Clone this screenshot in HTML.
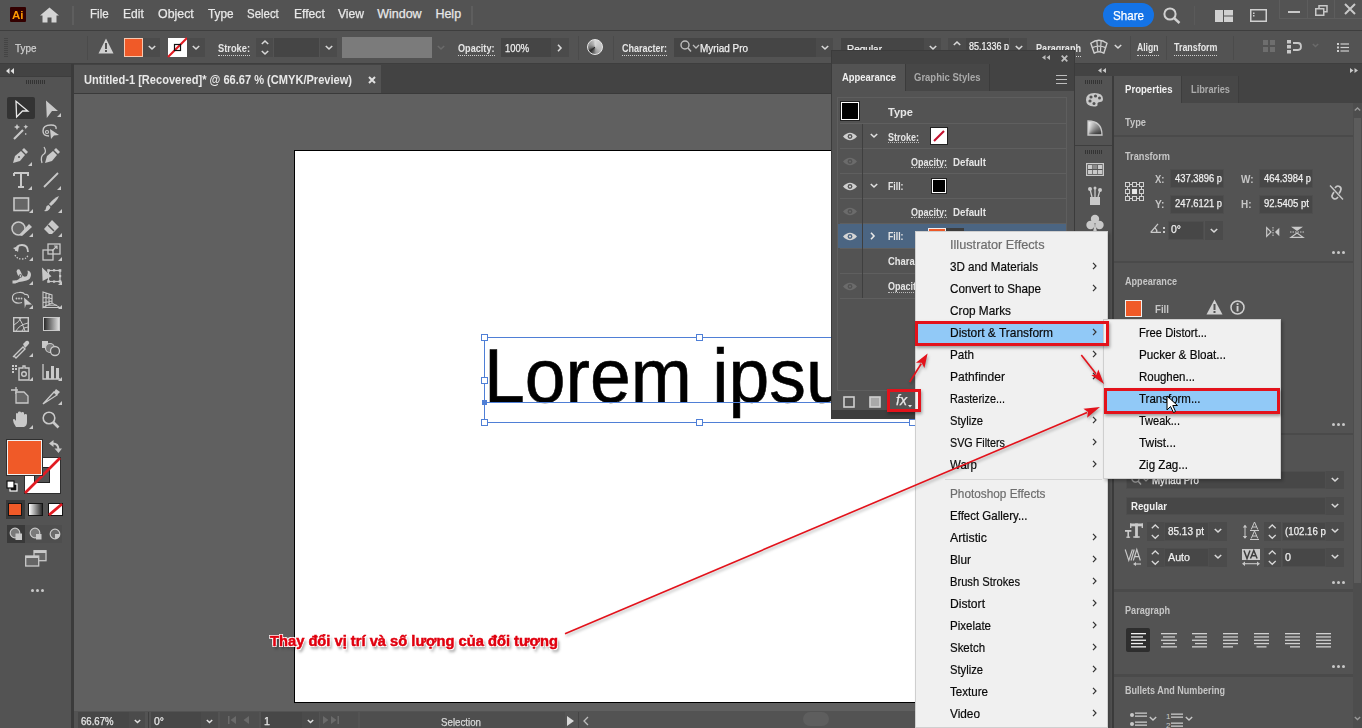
<!DOCTYPE html>
<html><head><meta charset="utf-8">
<style>
*{margin:0;padding:0;box-sizing:border-box}
html,body{width:1362px;height:728px;overflow:hidden}
body{background:#535353;font-family:"Liberation Sans",sans-serif;position:relative}
.a{position:absolute}
.t{position:absolute;white-space:pre;line-height:1.117}
svg{overflow:visible}
</style></head><body>

<div class="a" style="left:0px;top:0px;width:1362px;height:30px;background:#535353;"></div>
<div class="a" style="left:0px;top:30px;width:1362px;height:1px;background:#3e3e3e;"></div>
<div class="a" style="left:10px;top:7px;width:16px;height:15px;background:#330000;border-radius:1px"></div>
<span class="t" id="t0" style="left:12.20px;top:10.00px;font-size:10px;color:#ff9a00;font-weight:700;font-family:'Liberation Sans',sans-serif;transform:scaleX(1.1500);transform-origin:0 0;">Ai</span>
<svg class="a" style="left:40px;top:7px;" width="19" height="16" viewBox="0 0 19 16"><path d="M9.5 0.5 L19 8.5 L16.5 8.5 L16.5 15.5 L11.5 15.5 L11.5 10.5 L7.5 10.5 L7.5 15.5 L2.5 15.5 L2.5 8.5 L0 8.5 Z" fill="#d4d4d4"/></svg>
<div class="a" style="left:72px;top:6px;width:2px;height:19px;background:#5e5e5e;"></div>
<span class="t" id="t1" style="left:89.50px;top:8.00px;font-size:12.5px;color:#e8e8e8;font-weight:400;-webkit-text-stroke:0.25px #e8e8e8;font-family:'Liberation Sans',sans-serif;transform:scaleX(0.9278);transform-origin:0 0;">File</span>
<span class="t" id="t2" style="left:122.60px;top:8.00px;font-size:12.5px;color:#e8e8e8;font-weight:400;-webkit-text-stroke:0.25px #e8e8e8;font-family:'Liberation Sans',sans-serif;transform:scaleX(0.9653);transform-origin:0 0;">Edit</span>
<span class="t" id="t3" style="left:157.50px;top:8.00px;font-size:12.5px;color:#e8e8e8;font-weight:400;-webkit-text-stroke:0.25px #e8e8e8;font-family:'Liberation Sans',sans-serif;transform:scaleX(0.9906);transform-origin:0 0;">Object</span>
<span class="t" id="t4" style="left:207.50px;top:8.00px;font-size:12.5px;color:#e8e8e8;font-weight:400;-webkit-text-stroke:0.25px #e8e8e8;font-family:'Liberation Sans',sans-serif;transform:scaleX(0.9406);transform-origin:0 0;">Type</span>
<span class="t" id="t5" style="left:247.40px;top:8.00px;font-size:12.5px;color:#e8e8e8;font-weight:400;-webkit-text-stroke:0.25px #e8e8e8;font-family:'Liberation Sans',sans-serif;transform:scaleX(0.9151);transform-origin:0 0;">Select</span>
<span class="t" id="t6" style="left:293.50px;top:8.00px;font-size:12.5px;color:#e8e8e8;font-weight:400;-webkit-text-stroke:0.25px #e8e8e8;font-family:'Liberation Sans',sans-serif;transform:scaleX(0.9706);transform-origin:0 0;">Effect</span>
<span class="t" id="t7" style="left:338.00px;top:8.00px;font-size:12.5px;color:#e8e8e8;font-weight:400;-webkit-text-stroke:0.25px #e8e8e8;font-family:'Liberation Sans',sans-serif;transform:scaleX(0.9674);transform-origin:0 0;">View</span>
<span class="t" id="t8" style="left:377.20px;top:8.00px;font-size:12.5px;color:#e8e8e8;font-weight:400;-webkit-text-stroke:0.25px #e8e8e8;font-family:'Liberation Sans',sans-serif;">Window</span>
<span class="t" id="t9" style="left:435.40px;top:8.00px;font-size:12.5px;color:#e8e8e8;font-weight:400;-webkit-text-stroke:0.25px #e8e8e8;font-family:'Liberation Sans',sans-serif;">Help</span>
<div class="a" style="left:471px;top:6px;width:2px;height:19px;background:#5e5e5e;"></div>
<div class="a" style="left:1103px;top:3px;width:51px;height:24px;background:#1473e6;border-radius:12px"></div>
<span class="t" id="t10" style="left:1113.00px;top:9.00px;font-size:13px;color:#ffffff;font-weight:400;-webkit-text-stroke:0.25px #ffffff;font-family:'Liberation Sans',sans-serif;transform:scaleX(0.8933);transform-origin:0 0;">Share</span>
<svg class="a" style="left:1163px;top:7px;" width="19" height="17" viewBox="0 0 19 17"><circle cx="7" cy="7" r="5.6" fill="none" stroke="#d0d0d0" stroke-width="2"/><line x1="11" y1="11" x2="16.5" y2="16" stroke="#d0d0d0" stroke-width="2.4"/></svg>
<div class="a" style="left:1194px;top:6px;width:1px;height:19px;background:#5a5a5a;"></div>
<svg class="a" style="left:1215px;top:10px;" width="18" height="12" viewBox="0 0 18 12"><rect x="0" y="0" width="8" height="12" fill="#d0d0d0"/><rect x="9" y="0" width="9" height="5.5" fill="#d0d0d0"/><rect x="9" y="6.5" width="9" height="5.5" fill="#d0d0d0"/></svg>
<svg class="a" style="left:1250px;top:9px;" width="17" height="13" viewBox="0 0 17 13"><rect x="0.75" y="0.75" width="15.5" height="11.5" fill="none" stroke="#d0d0d0" stroke-width="1.5"/><rect x="3" y="3.5" width="1.5" height="1.5" fill="#d0d0d0"/><rect x="3" y="6" width="1.5" height="1.5" fill="#d0d0d0"/></svg>
<div class="a" style="left:1279px;top:-1px;width:84px;height:20px;border:1px solid #5d5d5d;"></div>
<div class="a" style="left:1307px;top:0px;width:1px;height:18px;background:#5d5d5d;"></div>
<div class="a" style="left:1334px;top:0px;width:1px;height:18px;background:#5d5d5d;"></div>
<div class="a" style="left:1288px;top:11px;width:12px;height:2px;background:#c8c8c8;"></div>
<svg class="a" style="left:1315px;top:5px;" width="13" height="11" viewBox="0 0 13 11"><rect x="4" y="0.75" width="8" height="6" fill="none" stroke="#c8c8c8" stroke-width="1.5"/><rect x="0.75" y="3.75" width="8" height="6.5" fill="#535353" stroke="#c8c8c8" stroke-width="1.5"/></svg>
<svg class="a" style="left:1344px;top:3px;" width="12" height="12" viewBox="0 0 12 12"><path d="M1 1 L11 11 M11 1 L1 11" stroke="#c8c8c8" stroke-width="2"/></svg>
<div class="a" style="left:0px;top:31px;width:1362px;height:33px;background:#535353;"></div>
<div class="a" style="left:0px;top:63px;width:1362px;height:1px;background:#3e3e3e;"></div>
<div class="a" style="left:4px;top:38px;width:4px;height:1px;background:#444444;"></div>
<div class="a" style="left:4px;top:40px;width:4px;height:1px;background:#444444;"></div>
<div class="a" style="left:4px;top:42px;width:4px;height:1px;background:#444444;"></div>
<div class="a" style="left:4px;top:44px;width:4px;height:1px;background:#444444;"></div>
<div class="a" style="left:4px;top:46px;width:4px;height:1px;background:#444444;"></div>
<div class="a" style="left:4px;top:48px;width:4px;height:1px;background:#444444;"></div>
<div class="a" style="left:4px;top:50px;width:4px;height:1px;background:#444444;"></div>
<div class="a" style="left:4px;top:52px;width:4px;height:1px;background:#444444;"></div>
<div class="a" style="left:4px;top:54px;width:4px;height:1px;background:#444444;"></div>
<div class="a" style="left:4px;top:56px;width:4px;height:1px;background:#444444;"></div>
<span class="t" id="t11" style="left:14.50px;top:42.00px;font-size:11px;color:#cfcfcf;font-weight:400;-webkit-text-stroke:0.25px #cfcfcf;font-family:'Liberation Sans',sans-serif;transform:scaleX(0.9011);transform-origin:0 0;">Type</span>
<div class="a" style="left:87px;top:36px;width:1px;height:24px;background:#4b4b4b;"></div>
<svg class="a" style="left:98px;top:38px;" width="16" height="16" viewBox="0 0 16 16"><path d="M8 0.5 L15.5 15.5 L0.5 15.5 Z" fill="#d0d0d0"/><rect x="7" y="5" width="2" height="6" fill="#535353"/><rect x="7" y="12" width="2" height="2" fill="#535353"/></svg>
<div class="a" style="left:124px;top:38px;width:19px;height:19px;background:#f05a28;border:1px solid #f7c8b0"></div>
<div class="a" style="left:143px;top:38px;width:17px;height:19px;background:#4b4b4b;"></div>
<svg class="a" style="left:147.5px;top:45.0px;" width="8" height="6.0" viewBox="0 0 8 6.0"><polyline points="0.8,1 4.0,4.0 7.2,1" fill="none" stroke="#d8d8d8" stroke-width="1.6"/></svg>
<div class="a" style="left:168px;top:38px;width:19px;height:19px;background:#ffffff;"></div>
<svg class="a" style="left:168px;top:38px;" width="19" height="19" viewBox="0 0 19 19"><line x1="0" y1="19" x2="19" y2="0" stroke="#e11b22" stroke-width="2.2"/><rect x="6.5" y="6.5" width="6" height="6" fill="none" stroke="#111" stroke-width="1.2"/></svg>
<div class="a" style="left:187px;top:38px;width:18px;height:19px;background:#4b4b4b;"></div>
<svg class="a" style="left:192.0px;top:45.0px;" width="8" height="6.0" viewBox="0 0 8 6.0"><polyline points="0.8,1 4.0,4.0 7.2,1" fill="none" stroke="#d8d8d8" stroke-width="1.6"/></svg>
<span class="t" id="t12" style="left:217.50px;top:42.00px;font-size:11.5px;color:#e6e6e6;font-weight:700;font-family:'Liberation Sans',sans-serif;transform:scaleX(0.8076);transform-origin:0 0;">Stroke:</span>
<div class="a" style="left:217.5px;top:55px;width:32px;height:1px;border-top:1px dotted #cfcfcf"></div>
<div class="a" style="left:256px;top:38px;width:17px;height:19px;background:#4b4b4b;"></div>
<svg class="a" style="left:260.5px;top:40.0px;" width="8" height="6.0" viewBox="0 0 8 6.0"><polyline points="0.8,4.0 4.0,1 7.2,4.0" fill="none" stroke="#d8d8d8" stroke-width="1.6"/></svg>
<svg class="a" style="left:260.5px;top:49.5px;" width="8" height="6.0" viewBox="0 0 8 6.0"><polyline points="0.8,1 4.0,4.0 7.2,1" fill="none" stroke="#d8d8d8" stroke-width="1.6"/></svg>
<div class="a" style="left:274px;top:38px;width:45px;height:19px;background:#454545;"></div>
<div class="a" style="left:320px;top:38px;width:17px;height:19px;background:#4b4b4b;"></div>
<svg class="a" style="left:324.5px;top:45.0px;" width="8" height="6.0" viewBox="0 0 8 6.0"><polyline points="0.8,1 4.0,4.0 7.2,1" fill="none" stroke="#d8d8d8" stroke-width="1.6"/></svg>
<div class="a" style="left:342px;top:37px;width:90px;height:21px;background:#7b7b7b;"></div>
<svg class="a" style="left:437.0px;top:45.0px;" width="8" height="6.0" viewBox="0 0 8 6.0"><polyline points="0.8,1 4.0,4.0 7.2,1" fill="none" stroke="#6a6a6a" stroke-width="1.6"/></svg>
<span class="t" id="t13" style="left:458.00px;top:42.00px;font-size:11.5px;color:#e6e6e6;font-weight:700;font-family:'Liberation Sans',sans-serif;transform:scaleX(0.7932);transform-origin:0 0;">Opacity:</span>
<div class="a" style="left:458px;top:55px;width:36.5px;height:1px;border-top:1px dotted #cfcfcf"></div>
<div class="a" style="left:501px;top:38px;width:50px;height:19px;background:#454545;"></div>
<span class="t" id="t14" style="left:504.50px;top:42.00px;font-size:11.5px;color:#f0f0f0;font-weight:400;-webkit-text-stroke:0.25px #f0f0f0;font-family:'Liberation Sans',sans-serif;transform:scaleX(0.8157);transform-origin:0 0;">100%</span>
<div class="a" style="left:551px;top:38px;width:18px;height:19px;background:#4b4b4b;"></div>
<svg class="a" style="left:557.0px;top:43.5px;" width="6.0" height="8" viewBox="0 0 6.0 8"><polyline points="1,0.8 4.0,4.0 1,7.2" fill="none" stroke="#d8d8d8" stroke-width="1.6"/></svg>
<div class="a" style="left:578px;top:36px;width:1px;height:24px;background:#4b4b4b;"></div>
<div class="a" style="left:587px;top:39px;width:16px;height:16px;border-radius:50%;border:1.5px solid #e8e8e8;background:conic-gradient(#d8d8d8 0deg,#c8c8c8 60deg,#bdbdbd 120deg,#9a9a9a 170deg,#5a5a5a 200deg,#2a2a2a 230deg,#707070 260deg,#9a9a9a 300deg,#b8b8b8 340deg,#d8d8d8 360deg)"></div>
<div class="a" style="left:613px;top:36px;width:1px;height:24px;background:#4b4b4b;"></div>
<span class="t" id="t15" style="left:622.00px;top:42.00px;font-size:11.5px;color:#e6e6e6;font-weight:700;font-family:'Liberation Sans',sans-serif;transform:scaleX(0.7822);transform-origin:0 0;">Character:</span>
<div class="a" style="left:622px;top:55px;width:45px;height:1px;border-top:1px dotted #cfcfcf"></div>
<div class="a" style="left:674px;top:38px;width:142px;height:19px;background:#454545;"></div>
<svg class="a" style="left:680px;top:40px;" width="22" height="14" viewBox="0 0 22 14"><circle cx="5" cy="5" r="4" fill="none" stroke="#bcbcbc" stroke-width="1.4"/><line x1="8" y1="8" x2="11" y2="11.5" stroke="#bcbcbc" stroke-width="1.5"/><polyline points="13,5 16,8 19,5" fill="none" stroke="#bcbcbc" stroke-width="1.3"/></svg>
<span class="t" id="t16" style="left:700.00px;top:42.00px;font-size:11.5px;color:#f0f0f0;font-weight:400;-webkit-text-stroke:0.25px #f0f0f0;font-family:'Liberation Sans',sans-serif;transform:scaleX(0.8632);transform-origin:0 0;">Myriad Pro</span>
<div class="a" style="left:816px;top:38px;width:17px;height:19px;background:#4b4b4b;"></div>
<svg class="a" style="left:820.5px;top:45.0px;" width="8" height="6.0" viewBox="0 0 8 6.0"><polyline points="0.8,1 4.0,4.0 7.2,1" fill="none" stroke="#d8d8d8" stroke-width="1.6"/></svg>
<div class="a" style="left:841px;top:38px;width:83px;height:19px;background:#454545;"></div>
<span class="t" id="t17" style="left:847.00px;top:43.00px;font-size:11.5px;color:#f0f0f0;font-weight:400;-webkit-text-stroke:0.25px #f0f0f0;font-family:'Liberation Sans',sans-serif;transform:scaleX(0.8689);transform-origin:0 0;">Regular</span>
<div class="a" style="left:924px;top:38px;width:17px;height:19px;background:#4b4b4b;"></div>
<svg class="a" style="left:928.5px;top:45.0px;" width="8" height="6.0" viewBox="0 0 8 6.0"><polyline points="0.8,1 4.0,4.0 7.2,1" fill="none" stroke="#d8d8d8" stroke-width="1.6"/></svg>
<div class="a" style="left:948px;top:38px;width:18px;height:19px;background:#4b4b4b;"></div>
<svg class="a" style="left:953.0px;top:41.0px;" width="8" height="6.0" viewBox="0 0 8 6.0"><polyline points="0.8,4.0 4.0,1 7.2,4.0" fill="none" stroke="#d8d8d8" stroke-width="1.6"/></svg>
<div class="a" style="left:966px;top:38px;width:43px;height:19px;background:#454545;"></div>
<span class="t" id="t18" style="left:969.00px;top:40.00px;font-size:11.5px;color:#f0f0f0;font-weight:400;-webkit-text-stroke:0.25px #f0f0f0;font-family:'Liberation Sans',sans-serif;transform:scaleX(0.7817);transform-origin:0 0;">85.1336 p</span>
<div class="a" style="left:1010px;top:38px;width:17px;height:19px;background:#4b4b4b;"></div>
<svg class="a" style="left:1014.5px;top:45.0px;" width="8" height="6.0" viewBox="0 0 8 6.0"><polyline points="0.8,1 4.0,4.0 7.2,1" fill="none" stroke="#d8d8d8" stroke-width="1.6"/></svg>
<span class="t" id="t19" style="left:1036.00px;top:42.00px;font-size:11.5px;color:#e6e6e6;font-weight:700;font-family:'Liberation Sans',sans-serif;transform:scaleX(0.7910);transform-origin:0 0;">Paragraph</span>
<div class="a" style="left:1036px;top:56px;width:45px;height:1px;border-top:1px dotted #cfcfcf"></div>
<svg class="a" style="left:1089px;top:38px;" width="20" height="17" viewBox="0 0 20 17"><path d="M1.8 5.2 Q9.9 -0.8 18 5.2 L14.8 15.2 Q10 12.3 5.2 15.2 Z" fill="none" stroke="#d0d0d0" stroke-width="1.4" stroke-linejoin="round"/><path d="M7.8 2 L8.8 13.6 M12.2 2 L11.4 13.6 M3.3 9.6 Q10 6.6 16.6 9.6" fill="none" stroke="#d0d0d0" stroke-width="1.2"/></svg>
<svg class="a" style="left:1113.5px;top:43.5px;" width="8" height="6.0" viewBox="0 0 8 6.0"><polyline points="0.8,1 4.0,4.0 7.2,1" fill="none" stroke="#d8d8d8" stroke-width="1.6"/></svg>
<div class="a" style="left:1130px;top:36px;width:1px;height:24px;background:#4b4b4b;"></div>
<span class="t" id="t20" style="left:1137.00px;top:41.00px;font-size:11.5px;color:#e6e6e6;font-weight:700;font-family:'Liberation Sans',sans-serif;transform:scaleX(0.7478);transform-origin:0 0;">Align</span>
<div class="a" style="left:1137px;top:55px;width:21.5px;height:1px;border-top:1px dotted #cfcfcf"></div>
<div class="a" style="left:1166px;top:36px;width:1px;height:24px;background:#4b4b4b;"></div>
<span class="t" id="t21" style="left:1173.50px;top:41.00px;font-size:11.5px;color:#e6e6e6;font-weight:700;font-family:'Liberation Sans',sans-serif;transform:scaleX(0.7733);transform-origin:0 0;">Transform</span>
<div class="a" style="left:1173.5px;top:55px;width:43.5px;height:1px;border-top:1px dotted #cfcfcf"></div>
<div class="a" style="left:1233px;top:36px;width:1px;height:24px;background:#4b4b4b;"></div>
<svg class="a" style="left:1263px;top:40px;" width="12" height="12" viewBox="0 0 12 12"><rect x="0" y="0" width="5" height="5" fill="#6e6e6e"/><rect x="7" y="0" width="5" height="5" fill="#6e6e6e"/><rect x="0" y="7" width="5" height="5" fill="#6e6e6e"/><rect x="7" y="7" width="5" height="5" fill="#6e6e6e"/></svg>
<svg class="a" style="left:1287px;top:40px;" width="15" height="14" viewBox="0 0 15 14"><rect x="0" y="0" width="4" height="3.5" fill="#c8c8c8"/><rect x="0" y="5" width="4" height="3.5" fill="#c8c8c8"/><rect x="0" y="10" width="4" height="3.5" fill="#c8c8c8"/><path d="M6 3 L11 3 Q14 3 14 6.5 Q14 10 11 10 L6 10" fill="none" stroke="#c8c8c8" stroke-width="1.8"/></svg>
<svg class="a" style="left:1312.0px;top:43.25px;" width="7" height="5.5" viewBox="0 0 7 5.5"><polyline points="0.8,1 3.5,3.5 6.2,1" fill="none" stroke="#6a6a6a" stroke-width="1.6"/></svg>
<svg class="a" style="left:1337px;top:43px;" width="12" height="9" viewBox="0 0 12 9"><rect x="0" y="0" width="2" height="2" fill="#d0d0d0"/><rect x="0" y="3.5" width="2" height="2" fill="#d0d0d0"/><rect x="0" y="7" width="2" height="2" fill="#d0d0d0"/><rect x="3.5" y="0.4" width="8.5" height="1.2" fill="#d0d0d0"/><rect x="3.5" y="3.9" width="8.5" height="1.2" fill="#d0d0d0"/><rect x="3.5" y="7.4" width="8.5" height="1.2" fill="#d0d0d0"/></svg>
<div class="a" style="left:0px;top:64px;width:71px;height:664px;background:#535353;"></div>
<div class="a" style="left:0px;top:64px;width:71px;height:12px;background:#434343;"></div>
<div class="a" style="left:71px;top:64px;width:3px;height:664px;background:#3b3b3b;"></div>
<div class="a" style="left:74px;top:64px;width:1001px;height:30px;background:#434343;"></div>
<div class="a" style="left:74px;top:65px;width:307px;height:28px;background:#535353;"></div>
<div class="a" style="left:74px;top:93px;width:1001px;height:1px;background:#3a3a3a;"></div>
<div class="a" style="left:74px;top:94px;width:1001px;height:617px;background:#606060;"></div>
<div class="a" style="left:294px;top:150px;width:800px;height:553px;background:#ffffff;border:1px solid #000"></div>
<span class="t" id="t22" style="left:83.50px;top:74.00px;font-size:12px;color:#e8e8e8;font-weight:700;font-family:'Liberation Sans',sans-serif;transform:scaleX(0.9227);transform-origin:0 0;">Untitled-1 [Recovered]* @ 66.67 % (CMYK/Preview)</span>
<svg class="a" style="left:368px;top:76px;" width="8" height="8" viewBox="0 0 8 8"><path d="M1 1 L7 7 M7 1 L1 7" stroke="#e0e0e0" stroke-width="2"/></svg>
<span class="t" id="t23" style="left:484.00px;top:334.00px;font-size:76px;color:#000000;font-weight:400;font-family:'Liberation Sans',sans-serif;-webkit-text-stroke:0.6px #000;transform:scaleX(0.9650);transform-origin:0 0;">Lorem ipsum</span>
<div class="a" style="left:484px;top:337px;width:428px;height:1px;background:#4f7fd6;"></div>
<div class="a" style="left:484px;top:422px;width:428px;height:1px;background:#4f7fd6;"></div>
<div class="a" style="left:484px;top:402px;width:428px;height:1px;background:#4f7fd6;"></div>
<div class="a" style="left:484px;top:337px;width:1px;height:85px;background:#4f7fd6;"></div>
<div class="a" style="left:912px;top:337px;width:1px;height:85px;background:#4f7fd6;"></div>
<div class="a" style="left:481px;top:334px;width:7px;height:7px;background:#ffffff;border:1px solid #4f7fd6"></div>
<div class="a" style="left:481px;top:377px;width:7px;height:7px;background:#ffffff;border:1px solid #4f7fd6"></div>
<div class="a" style="left:481px;top:419px;width:7px;height:7px;background:#ffffff;border:1px solid #4f7fd6"></div>
<div class="a" style="left:696px;top:334px;width:7px;height:7px;background:#ffffff;border:1px solid #4f7fd6"></div>
<div class="a" style="left:696px;top:419px;width:7px;height:7px;background:#ffffff;border:1px solid #4f7fd6"></div>
<div class="a" style="left:909px;top:334px;width:7px;height:7px;background:#ffffff;border:1px solid #4f7fd6"></div>
<div class="a" style="left:909px;top:377px;width:7px;height:7px;background:#ffffff;border:1px solid #4f7fd6"></div>
<div class="a" style="left:909px;top:419px;width:7px;height:7px;background:#ffffff;border:1px solid #4f7fd6"></div>
<div class="a" style="left:482px;top:400px;width:5px;height:5px;background:#4f7fd6;"></div>
<div class="a" style="left:74px;top:711px;width:1001px;height:17px;background:#535353;"></div>
<div class="a" style="left:1075px;top:64px;width:287px;height:12px;background:#434343;"></div>
<div class="a" style="left:1075px;top:76px;width:37px;height:652px;background:#535353;"></div>
<div class="a" style="left:1112px;top:76px;width:2px;height:652px;background:#3b3b3b;"></div>
<div class="a" style="left:1114px;top:76px;width:248px;height:27px;background:#434343;"></div>
<div class="a" style="left:1114px;top:76px;width:68px;height:27px;background:#535353;"></div>
<div class="a" style="left:1114px;top:103px;width:248px;height:625px;background:#535353;"></div>
<div class="a" style="left:831px;top:50px;width:244px;height:369px;background:#535353;border:1px solid #3b3b3b"></div>
<div class="a" style="left:832px;top:51px;width:242px;height:13px;background:#434343;"></div>
<div class="a" style="left:832px;top:64px;width:242px;height:27px;background:#434343;"></div>
<div class="a" style="left:832px;top:64px;width:73px;height:27px;background:#535353;"></div>
<div class="a" style="left:0px;top:76px;width:71px;height:1px;background:#3d3d3d;"></div>
<svg class="a" style="left:6px;top:68px;" width="8" height="6" viewBox="0 0 8 6"><path d="M3.5 0 L0 3 L3.5 6 Z M8 0 L4.5 3 L8 6 Z" fill="#e0e0e0"/></svg>
<div class="a" style="left:26px;top:80px;width:1px;height:4px;background:#333333;"></div>
<div class="a" style="left:28px;top:80px;width:1px;height:4px;background:#333333;"></div>
<div class="a" style="left:30px;top:80px;width:1px;height:4px;background:#333333;"></div>
<div class="a" style="left:32px;top:80px;width:1px;height:4px;background:#333333;"></div>
<div class="a" style="left:34px;top:80px;width:1px;height:4px;background:#333333;"></div>
<div class="a" style="left:36px;top:80px;width:1px;height:4px;background:#333333;"></div>
<div class="a" style="left:38px;top:80px;width:1px;height:4px;background:#333333;"></div>
<div class="a" style="left:40px;top:80px;width:1px;height:4px;background:#333333;"></div>
<div class="a" style="left:42px;top:80px;width:1px;height:4px;background:#333333;"></div>
<div class="a" style="left:44px;top:80px;width:1px;height:4px;background:#333333;"></div>
<div class="a" style="left:7px;top:97px;width:28px;height:22px;background:#333333;border-radius:2px"></div>
<svg class="a" style="left:15px;top:100px;" width="14" height="18" viewBox="0 0 14 18"><path d="M1 1.3 L12.8 11 L7.5 11 L1.6 17 Z" fill="none" stroke="#e8e8e8" stroke-width="1.3" stroke-linejoin="miter"/></svg>
<svg class="a" style="left:45px;top:100px;" width="14" height="19" viewBox="0 0 14 19"><path d="M1 0.6 L13 11 L7 11 L1.8 18 Z" fill="#c9c9c9"/></svg>
<svg class="a" style="left:57px;top:113px;" width="4" height="4" viewBox="0 0 4 4"><path d="M4 0 L4 4 L0 4 Z" fill="#c9c9c9"/></svg>
<svg class="a" style="left:12px;top:123px;" width="18" height="17" viewBox="0 0 18 17"><path d="M2 16 L11 7" stroke="#c9c9c9" stroke-width="2.2"/><path d="M4 3 l1 -2 l1 2 l2 1 l-2 1 l-1 2 l-1 -2 l-2 -1 Z" fill="#c9c9c9"/><path d="M13 3 l0.8 -1.6 l0.8 1.6 l1.6 0.8 l-1.6 0.8 l-0.8 1.6 l-0.8 -1.6 l-1.6 -0.8 Z" fill="#c9c9c9"/><path d="M13 10 l2 1 l-2 1 Z" fill="#c9c9c9"/></svg>
<svg class="a" style="left:41px;top:123px;" width="20" height="16" viewBox="0 0 20 16"><path d="M8 13 Q2 13 2 8 Q2 2 10 2 Q16 2 15 6" fill="none" stroke="#c9c9c9" stroke-width="1.4"/><circle cx="6" cy="9" r="1.5" fill="none" stroke="#c9c9c9" stroke-width="1.2"/><path d="M9 6 L18 12 L13 12.5 L10 16 Z" fill="#c9c9c9"/></svg>
<svg class="a" style="left:12px;top:147px;" width="17" height="17" viewBox="0 0 17 17"><path d="M1 16 L3 9 L9 4 L13 8 L8 14 Z" fill="#c9c9c9"/><path d="M10 3 L12 1 L16 5 L14 7 Z" fill="#c9c9c9"/><circle cx="7" cy="10" r="1" fill="#535353"/></svg>
<svg class="a" style="left:28px;top:162px;" width="4" height="4" viewBox="0 0 4 4"><path d="M4 0 L4 4 L0 4 Z" fill="#c9c9c9"/></svg>
<svg class="a" style="left:40px;top:146px;" width="21" height="18" viewBox="0 0 21 18"><path d="M5 17 L7 10 L13 5 L17 9 L12 15 Z" fill="#c9c9c9"/><path d="M14 4 L16 2 L20 6 L18 8 Z" fill="#c9c9c9"/><path d="M2 17 Q0 10 4 8 Q7 6 4 1" fill="none" stroke="#c9c9c9" stroke-width="1.3"/></svg>
<svg class="a" style="left:13px;top:172px;" width="16" height="16" viewBox="0 0 16 16"><path d="M1 1 L15 1 L15 4 M1 1 L1 4 M8 1 L8 15 M5 15 L11 15" fill="none" stroke="#c9c9c9" stroke-width="2"/></svg>
<svg class="a" style="left:28px;top:186px;" width="4" height="4" viewBox="0 0 4 4"><path d="M4 0 L4 4 L0 4 Z" fill="#c9c9c9"/></svg>
<svg class="a" style="left:43px;top:172px;" width="16" height="16" viewBox="0 0 16 16"><path d="M1 15 L15 1" stroke="#c9c9c9" stroke-width="1.8"/></svg>
<svg class="a" style="left:57px;top:186px;" width="4" height="4" viewBox="0 0 4 4"><path d="M4 0 L4 4 L0 4 Z" fill="#c9c9c9"/></svg>
<svg class="a" style="left:13px;top:197px;" width="16" height="14" viewBox="0 0 16 14"><rect x="1" y="1" width="14.5" height="12.5" fill="#666" stroke="#c9c9c9" stroke-width="1.6"/></svg>
<svg class="a" style="left:29px;top:209px;" width="4" height="4" viewBox="0 0 4 4"><path d="M4 0 L4 4 L0 4 Z" fill="#c9c9c9"/></svg>
<svg class="a" style="left:43px;top:195px;" width="17" height="17" viewBox="0 0 17 17"><path d="M16 1 Q14 6 8 11 L6 9 Q11 3 16 1 Z" fill="#c9c9c9"/><path d="M5.5 10 L7.5 12 Q6 17 1 16 Q3 15 3 13 Q3 10.5 5.5 10 Z" fill="#c9c9c9"/></svg>
<svg class="a" style="left:58px;top:209px;" width="4" height="4" viewBox="0 0 4 4"><path d="M4 0 L4 4 L0 4 Z" fill="#c9c9c9"/></svg>
<svg class="a" style="left:11px;top:220px;" width="22" height="17" viewBox="0 0 22 17"><circle cx="7.5" cy="8.5" r="6.5" fill="#666" stroke="#c9c9c9" stroke-width="1.5"/><path d="M8 15 L18 4 L21 7 L11 16 Z" fill="#c9c9c9"/></svg>
<svg class="a" style="left:29px;top:233px;" width="4" height="4" viewBox="0 0 4 4"><path d="M4 0 L4 4 L0 4 Z" fill="#c9c9c9"/></svg>
<svg class="a" style="left:43px;top:219px;" width="17" height="17" viewBox="0 0 17 17"><path d="M9 1 L16 8 L9 15 L6 15 L1 10 Z" fill="#c9c9c9"/><path d="M5 6 L11 12" stroke="#535353" stroke-width="1.5"/><path d="M3.5 9 L7 12.5" stroke="#535353" stroke-width="0"/></svg>
<svg class="a" style="left:58px;top:233px;" width="4" height="4" viewBox="0 0 4 4"><path d="M4 0 L4 4 L0 4 Z" fill="#c9c9c9"/></svg>
<svg class="a" style="left:13px;top:243px;" width="17" height="18" viewBox="0 0 17 18"><path d="M3 8 Q3 2 9 2 Q15 2 15 9" fill="none" stroke="#c9c9c9" stroke-width="1.8"/><path d="M0 5 L5 9 L6 3 Z" fill="#c9c9c9"/><path d="M2 12 Q4 16 9 16 Q14 16 15 12" fill="none" stroke="#c9c9c9" stroke-width="1.3" stroke-dasharray="1.4 1.4"/></svg>
<svg class="a" style="left:29px;top:257px;" width="4" height="4" viewBox="0 0 4 4"><path d="M4 0 L4 4 L0 4 Z" fill="#c9c9c9"/></svg>
<svg class="a" style="left:42px;top:243px;" width="19" height="18" viewBox="0 0 19 18"><rect x="6" y="1" width="12" height="10" fill="none" stroke="#c9c9c9" stroke-width="1.3"/><rect x="1" y="7" width="10" height="10" fill="none" stroke="#c9c9c9" stroke-width="1.3"/><path d="M10 8 L15 3 M12 3 L15 3 L15 6" fill="none" stroke="#c9c9c9" stroke-width="1.2"/></svg>
<svg class="a" style="left:58px;top:257px;" width="4" height="4" viewBox="0 0 4 4"><path d="M4 0 L4 4 L0 4 Z" fill="#c9c9c9"/></svg>
<svg class="a" style="left:11px;top:267px;" width="21" height="17" viewBox="0 0 21 17"><path d="M2 15.5 L4 13.5 Q8 13 9 10.5 Q6 8 5.5 4.5 Q6 1.5 8.5 2.5 Q10 5 11.5 8.5 Q13 10.5 16 9 Q17.5 6 16.5 3.5 Q20 4 20 8 Q19.5 12.5 15.5 13.5 Q11 14.5 8 15 Q5 17 2 15.5 Z" fill="#c9c9c9"/><circle cx="9.5" cy="9" r="1.8" fill="#535353"/><circle cx="9.5" cy="9" r="0.9" fill="#c9c9c9"/><rect x="1.5" y="13.5" width="3" height="3" fill="#c9c9c9"/></svg>
<svg class="a" style="left:29px;top:281px;" width="4" height="4" viewBox="0 0 4 4"><path d="M4 0 L4 4 L0 4 Z" fill="#c9c9c9"/></svg>
<svg class="a" style="left:41px;top:266px;" width="21" height="18" viewBox="0 0 21 18"><path d="M1 1.6 L10.5 10.2 L1.6 15.1 Z" fill="#c9c9c9"/><rect x="7.5" y="4.5" width="11.5" height="11" fill="none" stroke="#c9c9c9" stroke-width="1.2"/><g fill="#c9c9c9"><rect x="6.2" y="3.2" width="2.6" height="2.6"/><rect x="17.7" y="3.2" width="2.6" height="2.6"/><rect x="6.2" y="14.2" width="2.6" height="2.6"/><rect x="17.7" y="14.2" width="2.6" height="2.6"/><rect x="12" y="3.2" width="2.2" height="2.2"/><rect x="12" y="14.5" width="2.2" height="2.2"/><rect x="18" y="9" width="2.2" height="2.2"/></g></svg>
<svg class="a" style="left:58px;top:281px;" width="4" height="4" viewBox="0 0 4 4"><path d="M4 0 L4 4 L0 4 Z" fill="#c9c9c9"/></svg>
<svg class="a" style="left:11px;top:291px;" width="22" height="18" viewBox="0 0 22 18"><path d="M11 11.5 Q3 13.5 1.5 8 Q0.5 2 8 1.5 Q12 0.8 14 3.5 Q18 3 17.5 7" fill="none" stroke="#c9c9c9" stroke-width="1.2"/><circle cx="5.5" cy="7.5" r="0.9" fill="#c9c9c9"/><circle cx="8" cy="7.5" r="0.9" fill="#c9c9c9"/><circle cx="10.5" cy="7.5" r="0.9" fill="#c9c9c9"/><path d="M13 6.5 L21 13.5 L15 13.8 L13.8 17.2 Z" fill="#c9c9c9"/></svg>
<svg class="a" style="left:29px;top:305px;" width="4" height="4" viewBox="0 0 4 4"><path d="M4 0 L4 4 L0 4 Z" fill="#c9c9c9"/></svg>
<svg class="a" style="left:42px;top:291px;" width="19" height="18" viewBox="0 0 19 18"><path d="M1 1 L10 4 L10 12 L1 16.5 Z M1 6.5 L10 7.5 M1 11.5 L10 10 M4 2 L4 15 M7 3 L7 13.5" fill="none" stroke="#c9c9c9" stroke-width="1.1"/><path d="M10 12 L18 16.5 L1 16.5 M6 14.2 L15 14.2" fill="none" stroke="#c9c9c9" stroke-width="1"/></svg>
<svg class="a" style="left:58px;top:305px;" width="4" height="4" viewBox="0 0 4 4"><path d="M4 0 L4 4 L0 4 Z" fill="#c9c9c9"/></svg>
<svg class="a" style="left:13px;top:317px;" width="16" height="15" viewBox="0 0 16 15"><rect x="0.7" y="0.7" width="14.6" height="13.6" fill="none" stroke="#c9c9c9" stroke-width="1.4"/><path d="M1 8 Q6 5 8 1 M3 14 Q6 8 15 6 M9 14 Q10 10 15 10 M6 1 Q9 5 12 14" fill="none" stroke="#c9c9c9" stroke-width="1"/></svg>
<div class="a" style="left:43px;top:317px;width:17px;height:14px;border:1.5px solid #c9c9c9;background:linear-gradient(90deg,#2a2a2a,#e0e0e0)"></div>
<svg class="a" style="left:12px;top:340px;" width="18" height="18" viewBox="0 0 18 18"><path d="M2 16 L1 17 M2 16 L11 7 L13 9 L4 18 Z" fill="none" stroke="#c9c9c9" stroke-width="1.4"/><path d="M11 4 L14 1 Q16 0 17 2 Q18 3 16 5 L13 8 Z" fill="#c9c9c9"/></svg>
<svg class="a" style="left:29px;top:353px;" width="4" height="4" viewBox="0 0 4 4"><path d="M4 0 L4 4 L0 4 Z" fill="#c9c9c9"/></svg>
<svg class="a" style="left:41px;top:340px;" width="20" height="16" viewBox="0 0 20 16"><rect x="1" y="1" width="6" height="7" fill="#c9c9c9"/><circle cx="9" cy="8" r="4.5" fill="#777" stroke="#c9c9c9" stroke-width="1.2"/><circle cx="14" cy="11" r="4.5" fill="#535353" stroke="#c9c9c9" stroke-width="1.3"/></svg>
<svg class="a" style="left:11px;top:363px;" width="20" height="18" viewBox="0 0 20 18"><g fill="#c9c9c9"><rect x="1" y="2" width="2" height="2"/><rect x="4" y="2" width="2" height="2"/><rect x="1" y="5" width="2" height="2"/><rect x="4" y="5" width="2" height="2"/><rect x="1" y="8" width="2" height="2"/></g><path d="M8 5 L12 5 L12 3 L14 3 L14 5 L18 5 L18 17 L8 17 Z" fill="none" stroke="#c9c9c9" stroke-width="1.4"/><circle cx="13" cy="11" r="2.3" fill="none" stroke="#c9c9c9" stroke-width="1.4"/></svg>
<svg class="a" style="left:29px;top:377px;" width="4" height="4" viewBox="0 0 4 4"><path d="M4 0 L4 4 L0 4 Z" fill="#c9c9c9"/></svg>
<svg class="a" style="left:42px;top:364px;" width="18" height="16" viewBox="0 0 18 16"><path d="M1 0 L1 15 L18 15" fill="none" stroke="#c9c9c9" stroke-width="1.3"/><rect x="4" y="7" width="3" height="8" fill="#c9c9c9"/><rect x="9" y="2" width="3" height="13" fill="#c9c9c9"/><rect x="14" y="4" width="3" height="11" fill="#c9c9c9"/></svg>
<svg class="a" style="left:58px;top:377px;" width="4" height="4" viewBox="0 0 4 4"><path d="M4 0 L4 4 L0 4 Z" fill="#c9c9c9"/></svg>
<svg class="a" style="left:11px;top:387px;" width="18" height="17" viewBox="0 0 18 17"><path d="M0 3 L7 3 M5 0 L5 7" stroke="#c9c9c9" stroke-width="1.3"/><path d="M5 5 L13 5 L17 9 L17 16 L5 16 Z" fill="#666" stroke="#c9c9c9" stroke-width="1.3"/></svg>
<svg class="a" style="left:42px;top:388px;" width="18" height="17" viewBox="0 0 18 17"><path d="M1 16 L12 4 L15 7 Z" fill="none" stroke="#c9c9c9" stroke-width="1.3"/><path d="M12 4 L14 1 L18 4 L15 7 Z" fill="#c9c9c9"/></svg>
<svg class="a" style="left:58px;top:401px;" width="4" height="4" viewBox="0 0 4 4"><path d="M4 0 L4 4 L0 4 Z" fill="#c9c9c9"/></svg>
<svg class="a" style="left:12px;top:411px;" width="17" height="17" viewBox="0 0 17 17"><path d="M4 16 Q1 12 1 9 Q1 8 2 8 Q3 8 4 10 L4 3 Q4 2 5 2 Q6 2 6 3 L6 8 L6 1.5 Q6 0.5 7.5 0.5 Q9 0.5 9 1.5 L9 8 L9 2 Q9 1 10.5 1 Q12 1 12 2 L12 8 L12 4 Q12 3 13.5 3 Q15 3 15 4 L15 11 Q15 15 12 16 Z" fill="#c9c9c9"/></svg>
<svg class="a" style="left:29px;top:425px;" width="4" height="4" viewBox="0 0 4 4"><path d="M4 0 L4 4 L0 4 Z" fill="#c9c9c9"/></svg>
<svg class="a" style="left:42px;top:411px;" width="18" height="17" viewBox="0 0 18 17"><circle cx="7" cy="7" r="5.8" fill="none" stroke="#c9c9c9" stroke-width="1.6"/><path d="M11 11 L16.5 16.5" stroke="#c9c9c9" stroke-width="2.6"/></svg>
<div class="a" style="left:7px;top:440px;width:35px;height:35px;background:#f05a28;border:1px solid #f0f0f0;outline:1px solid #2f2f2f"></div>
<svg class="a" style="left:49px;top:440px;" width="13" height="13" viewBox="0 0 13 13"><path d="M3 3.5 Q9 3 9.5 9" fill="none" stroke="#c9c9c9" stroke-width="2"/><path d="M0 3.5 L4.5 0 L4.5 7 Z M5.5 8.5 L13 8.5 L9.5 13 Z" fill="#c9c9c9"/></svg>
<div class="a" style="left:25px;top:458px;width:35px;height:35px;background:#ffffff;outline:1px solid #2f2f2f"></div>
<div class="a" style="left:35px;top:468px;width:14px;height:14px;background:#535353;outline:1px solid #222"></div>
<div class="a" style="left:42px;top:440px;width:0px;height:0px;background:#000;"></div>
<svg class="a" style="left:25px;top:458px" width="35" height="35"><line x1="0" y1="35" x2="35" y2="0" stroke="#e11b22" stroke-width="2.6"/></svg>
<div class="a" style="left:7px;top:440px;width:35px;height:35px;background:#f05a28;border:1px solid #f0f0f0;box-shadow:0 0 0 1px #2f2f2f"></div>
<svg class="a" style="left:6px;top:480px;" width="12" height="12" viewBox="0 0 12 12"><rect x="4" y="4" width="7" height="7" fill="#111" stroke="#fff" stroke-width="1.2"/><rect x="1" y="1" width="7" height="7" fill="#fff" stroke="#111" stroke-width="1.2"/></svg>
<div class="a" style="left:6px;top:500px;width:19px;height:19px;background:#393939;"></div>
<div class="a" style="left:9px;top:504px;width:12px;height:11px;background:#f05a28;box-shadow:0 0 0 1px #151515"></div>
<div class="a" style="left:29px;top:504px;width:13px;height:11px;background:linear-gradient(90deg,#fff,#2a2a2a);box-shadow:0 0 0 1px #151515"></div>
<div class="a" style="left:49px;top:504px;width:13px;height:11px;background:#ffffff;box-shadow:0 0 0 1px #151515"></div>
<svg class="a" style="left:49px;top:504px;" width="13" height="11" viewBox="0 0 13 11"><line x1="0" y1="11" x2="13" y2="0" stroke="#e11b22" stroke-width="2.8"/></svg>
<div class="a" style="left:7px;top:525px;width:18px;height:18px;background:#393939;"></div>
<div class="a" style="left:25px;top:525px;width:37px;height:18px;background:#4e4e4e;"></div>
<svg class="a" style="left:9px;top:527px;" width="14" height="14" viewBox="0 0 14 14"><circle cx="6" cy="6" r="4.8" fill="#7a7a7a" stroke="#c9c9c9" stroke-width="1.2"/><rect x="6.5" y="6.5" width="6.5" height="6.5" fill="#c9c9c9"/></svg>
<svg class="a" style="left:29px;top:527px;" width="14" height="14" viewBox="0 0 14 14"><circle cx="6" cy="6" r="4.8" fill="#7a7a7a" stroke="#c9c9c9" stroke-width="1.2"/><rect x="7" y="7" width="5.5" height="5.5" fill="#c9c9c9"/></svg>
<svg class="a" style="left:49px;top:528px;" width="12" height="12" viewBox="0 0 12 12"><circle cx="6" cy="6" r="4.8" fill="#6a6a6a" stroke="#c9c9c9" stroke-width="1.2"/><path d="M6 6 L11 6 A5 5 0 0 1 6 11 Z" fill="#c9c9c9"/></svg>
<svg class="a" style="left:25px;top:550px;" width="22" height="17" viewBox="0 0 22 17"><rect x="9" y="0.7" width="12" height="10" fill="#666" stroke="#c9c9c9" stroke-width="1.3"/><rect x="0.7" y="6" width="13" height="10" fill="#666" stroke="#c9c9c9" stroke-width="1.3"/><rect x="1" y="6" width="12" height="2" fill="#c9c9c9"/><rect x="9" y="1" width="12" height="2" fill="#c9c9c9"/></svg>
<div class="a" style="left:31px;top:589px;width:3px;height:3px;border-radius:2px;background:#c9c9c9"></div>
<div class="a" style="left:36px;top:589px;width:3px;height:3px;border-radius:2px;background:#c9c9c9"></div>
<div class="a" style="left:41px;top:589px;width:3px;height:3px;border-radius:2px;background:#c9c9c9"></div>
<svg class="a" style="left:1042px;top:55px;" width="8" height="5" viewBox="0 0 8 5"><path d="M3.5 0 L0 2.5 L3.5 5 Z M8 0 L4.5 2.5 L8 5 Z" fill="#bdbdbd"/></svg>
<svg class="a" style="left:1061px;top:55px;" width="7" height="7" viewBox="0 0 7 7"><path d="M0.7 0.7 L6.3 6.3 M6.3 0.7 L0.7 6.3" stroke="#bdbdbd" stroke-width="1.8"/></svg>
<div class="a" style="left:905px;top:64px;width:85px;height:27px;background:#474747;border-left:1px solid #3b3b3b;border-right:1px solid #3b3b3b"></div>
<span class="t" id="t24" style="left:841.50px;top:71.00px;font-size:11.5px;color:#f0f0f0;font-weight:700;font-family:'Liberation Sans',sans-serif;transform:scaleX(0.8201);transform-origin:0 0;">Appearance</span>
<span class="t" id="t25" style="left:914.00px;top:71.00px;font-size:11.5px;color:#a9a9a9;font-weight:700;font-family:'Liberation Sans',sans-serif;transform:scaleX(0.8256);transform-origin:0 0;">Graphic Styles</span>
<div class="a" style="left:1056px;top:75px;width:11px;height:1.4px;background:#bdbdbd;"></div>
<div class="a" style="left:1056px;top:79px;width:11px;height:1.4px;background:#bdbdbd;"></div>
<div class="a" style="left:1056px;top:83px;width:11px;height:1.4px;background:#bdbdbd;"></div>
<div class="a" style="left:837px;top:97px;width:230px;height:294px;background:#535353;border:1px solid #5e5e5e"></div>
<div class="a" style="left:840px;top:123px;width:226px;height:1px;background:#5f5f5f;"></div>
<div class="a" style="left:840px;top:148px;width:226px;height:1px;background:#5f5f5f;"></div>
<div class="a" style="left:840px;top:173px;width:226px;height:1px;background:#5f5f5f;"></div>
<div class="a" style="left:840px;top:198px;width:226px;height:1px;background:#5f5f5f;"></div>
<div class="a" style="left:840px;top:223px;width:226px;height:1px;background:#5f5f5f;"></div>
<div class="a" style="left:840px;top:248px;width:226px;height:1px;background:#5f5f5f;"></div>
<div class="a" style="left:840px;top:273px;width:226px;height:1px;background:#5f5f5f;"></div>
<div class="a" style="left:840px;top:298px;width:226px;height:1px;background:#5f5f5f;"></div>
<div class="a" style="left:838px;top:224px;width:228px;height:24px;background:#4b6582;"></div>
<div class="a" style="left:862px;top:124px;width:1px;height:174px;background:#3f3f3f;"></div>
<div class="a" style="left:841px;top:102px;width:18px;height:18px;background:#000;border:1.5px solid #fff;box-shadow:0 0 0 1px #222"></div>
<span class="t" id="t26" style="left:888.00px;top:106.00px;font-size:11px;color:#e6e6e6;font-weight:700;font-family:'Liberation Sans',sans-serif;transform:scaleX(1.0057);transform-origin:0 0;">Type</span>
<svg class="a" style="left:843px;top:131.5px;" width="14" height="9" viewBox="0 0 14 9"><path d="M0 4.5 Q7 -3 14 4.5 Q7 12 0 4.5 Z" fill="#cfcfcf"/><circle cx="7" cy="4.5" r="2.4" fill="#535353"/><circle cx="7" cy="4.5" r="1.1" fill="#cfcfcf"/></svg>
<svg class="a" style="left:869.5px;top:132.5px;" width="8" height="6.0" viewBox="0 0 8 6.0"><polyline points="0.8,1 4.0,4.0 7.2,1" fill="none" stroke="#e0e0e0" stroke-width="1.6"/></svg>
<span class="t" id="t27" style="left:888.00px;top:131.00px;font-size:11px;color:#e6e6e6;font-weight:700;font-family:'Liberation Sans',sans-serif;transform:scaleX(0.8178);transform-origin:0 0;">Stroke:</span>
<div class="a" style="left:888px;top:142px;width:31px;height:1px;border-top:1px dotted #bbbbbb"></div>
<div class="a" style="left:931px;top:128px;width:16px;height:16px;background:#ffffff;box-shadow:0 0 0 1px #222"></div>
<svg class="a" style="left:931px;top:128px;" width="16" height="16" viewBox="0 0 16 16"><line x1="3" y1="13" x2="13" y2="3" stroke="#c4122f" stroke-width="2.2"/></svg>
<svg class="a" style="left:843px;top:156.5px;" width="14" height="9" viewBox="0 0 14 9"><path d="M0 4.5 Q7 -3 14 4.5 Q7 12 0 4.5 Z" fill="#6b6b6b"/><circle cx="7" cy="4.5" r="2.4" fill="#535353"/><circle cx="7" cy="4.5" r="1.1" fill="#6b6b6b"/></svg>
<span class="t" id="t28" style="left:911.00px;top:156.00px;font-size:11px;color:#e6e6e6;font-weight:700;font-family:'Liberation Sans',sans-serif;transform:scaleX(0.8179);transform-origin:0 0;">Opacity:</span>
<div class="a" style="left:911px;top:167px;width:36px;height:1px;border-top:1px dotted #bbbbbb"></div>
<span class="t" id="t29" style="left:953.00px;top:156.00px;font-size:11px;color:#e6e6e6;font-weight:700;font-family:'Liberation Sans',sans-serif;transform:scaleX(0.8852);transform-origin:0 0;">Default</span>
<svg class="a" style="left:843px;top:181.5px;" width="14" height="9" viewBox="0 0 14 9"><path d="M0 4.5 Q7 -3 14 4.5 Q7 12 0 4.5 Z" fill="#cfcfcf"/><circle cx="7" cy="4.5" r="2.4" fill="#535353"/><circle cx="7" cy="4.5" r="1.1" fill="#cfcfcf"/></svg>
<svg class="a" style="left:869.5px;top:182.5px;" width="8" height="6.0" viewBox="0 0 8 6.0"><polyline points="0.8,1 4.0,4.0 7.2,1" fill="none" stroke="#e0e0e0" stroke-width="1.6"/></svg>
<span class="t" id="t30" style="left:888.00px;top:180.00px;font-size:11px;color:#e6e6e6;font-weight:700;font-family:'Liberation Sans',sans-serif;transform:scaleX(0.7923);transform-origin:0 0;">Fill:</span>
<div class="a" style="left:932px;top:179px;width:14px;height:14px;background:#000;border:1px solid #fff;box-shadow:0 0 0 1px #222"></div>
<svg class="a" style="left:843px;top:206.5px;" width="14" height="9" viewBox="0 0 14 9"><path d="M0 4.5 Q7 -3 14 4.5 Q7 12 0 4.5 Z" fill="#6b6b6b"/><circle cx="7" cy="4.5" r="2.4" fill="#535353"/><circle cx="7" cy="4.5" r="1.1" fill="#6b6b6b"/></svg>
<span class="t" id="t31" style="left:911.00px;top:206.00px;font-size:11px;color:#e6e6e6;font-weight:700;font-family:'Liberation Sans',sans-serif;transform:scaleX(0.8179);transform-origin:0 0;">Opacity:</span>
<div class="a" style="left:911px;top:217px;width:36px;height:1px;border-top:1px dotted #bbbbbb"></div>
<span class="t" id="t32" style="left:953.00px;top:206.00px;font-size:11px;color:#e6e6e6;font-weight:700;font-family:'Liberation Sans',sans-serif;transform:scaleX(0.8852);transform-origin:0 0;">Default</span>
<svg class="a" style="left:843px;top:231.5px;" width="14" height="9" viewBox="0 0 14 9"><path d="M0 4.5 Q7 -3 14 4.5 Q7 12 0 4.5 Z" fill="#d5d5d5"/><circle cx="7" cy="4.5" r="2.4" fill="#4b6582"/><circle cx="7" cy="4.5" r="1.1" fill="#d5d5d5"/></svg>
<svg class="a" style="left:869.5px;top:231.5px;" width="6.0" height="8" viewBox="0 0 6.0 8"><polyline points="1,0.8 4.0,4.0 1,7.2" fill="none" stroke="#e8e8e8" stroke-width="1.6"/></svg>
<span class="t" id="t33" style="left:888.00px;top:230.00px;font-size:11px;color:#e6e6e6;font-weight:700;font-family:'Liberation Sans',sans-serif;transform:scaleX(0.7923);transform-origin:0 0;">Fill:</span>
<div class="a" style="left:928px;top:228px;width:18px;height:17px;background:#f05a28;border:1px solid #f0f0f0"></div>
<div class="a" style="left:946px;top:228px;width:18px;height:17px;background:#3d3d3d;"></div>
<span class="t" id="t34" style="left:888.00px;top:255.00px;font-size:11px;color:#e6e6e6;font-weight:700;font-family:'Liberation Sans',sans-serif;transform:scaleX(0.8567);transform-origin:0 0;">Character</span>
<svg class="a" style="left:843px;top:281.5px;" width="14" height="9" viewBox="0 0 14 9"><path d="M0 4.5 Q7 -3 14 4.5 Q7 12 0 4.5 Z" fill="#6b6b6b"/><circle cx="7" cy="4.5" r="2.4" fill="#535353"/><circle cx="7" cy="4.5" r="1.1" fill="#6b6b6b"/></svg>
<div class="a" style="left:862px;top:274px;width:1px;height:24px;background:#3f3f3f;"></div>
<span class="t" id="t35" style="left:888.00px;top:280.00px;font-size:11px;color:#e6e6e6;font-weight:700;font-family:'Liberation Sans',sans-serif;transform:scaleX(0.8179);transform-origin:0 0;">Opacity:</span>
<div class="a" style="left:888px;top:292px;width:36px;height:1px;border-top:1px dotted #bbbbbb"></div>
<div class="a" style="left:832px;top:391px;width:242px;height:19px;background:#535353;"></div>
<svg class="a" style="left:843px;top:396px;" width="12" height="12" viewBox="0 0 12 12"><rect x="1" y="1" width="10" height="10" fill="none" stroke="#d0d0d0" stroke-width="1.6"/></svg>
<svg class="a" style="left:869px;top:396px;" width="12" height="12" viewBox="0 0 12 12"><rect x="1" y="1" width="10" height="10" fill="#a9a9a9" stroke="#d0d0d0" stroke-width="1.6"/></svg>
<span class="t" id="t36" style="left:895.50px;top:393.00px;font-size:14px;color:#e8e8e8;font-weight:400;-webkit-text-stroke:0.25px #e8e8e8;font-family:'Liberation Sans',sans-serif;font-style:italic;transform:scaleX(1.0100);transform-origin:0 0;">fx</span>
<svg class="a" style="left:907.5px;top:404.5px;" width="4" height="3" viewBox="0 0 4 3"><path d="M0 0 L4 0 L2 2.5 Z" fill="#e8e8e8"/></svg>
<div class="a" style="left:832px;top:410px;width:242px;height:9px;background:#3e3e3e;"></div>
<svg class="a" style="left:1098px;top:68px;" width="8" height="5" viewBox="0 0 8 5"><path d="M3.5 0 L0 2.5 L3.5 5 Z M8 0 L4.5 2.5 L8 5 Z" fill="#c8c8c8"/></svg>
<svg class="a" style="left:1350px;top:68px;" width="8" height="5" viewBox="0 0 8 5"><path d="M0 0 L3.5 2.5 L0 5 Z M4.5 0 L8 2.5 L4.5 5 Z" fill="#c8c8c8"/></svg>
<div class="a" style="left:1085px;top:80px;width:1px;height:4px;background:#333333;"></div>
<div class="a" style="left:1087px;top:80px;width:1px;height:4px;background:#333333;"></div>
<div class="a" style="left:1089px;top:80px;width:1px;height:4px;background:#333333;"></div>
<div class="a" style="left:1091px;top:80px;width:1px;height:4px;background:#333333;"></div>
<div class="a" style="left:1093px;top:80px;width:1px;height:4px;background:#333333;"></div>
<div class="a" style="left:1095px;top:80px;width:1px;height:4px;background:#333333;"></div>
<div class="a" style="left:1097px;top:80px;width:1px;height:4px;background:#333333;"></div>
<div class="a" style="left:1099px;top:80px;width:1px;height:4px;background:#333333;"></div>
<div class="a" style="left:1101px;top:80px;width:1px;height:4px;background:#333333;"></div>
<svg class="a" style="left:1085px;top:92px;" width="19" height="15" viewBox="0 0 19 15"><path d="M9.5 1 Q18 1 18 7 Q18 10 15 10 Q12 10 12.5 12.5 Q13 14.5 9 14.5 Q1 14 1 8 Q1 1 9.5 1 Z" fill="#c9c9c9"/><circle cx="5" cy="9" r="1.6" fill="#535353"/><circle cx="6" cy="5" r="1.6" fill="#535353"/><circle cx="10.5" cy="4" r="1.6" fill="#535353"/><circle cx="14.5" cy="6" r="1.5" fill="#535353"/><circle cx="9" cy="11.5" r="1.5" fill="#535353"/></svg>
<div class="a" style="left:1087px;top:120px;width:16px;height:16px;background:conic-gradient(from 0deg at 0% 100%, #fff 0deg, #222 90deg);clip-path:path('M1 15 L1 1 Q15 1 15 15 Z')"></div>
<svg class="a" style="left:1087px;top:120px;" width="16" height="16" viewBox="0 0 16 16"><path d="M1 15 L1 1 Q15 1 15 15 Z" fill="none" stroke="#c9c9c9" stroke-width="1.3"/></svg>
<div class="a" style="left:1075px;top:145px;width:37px;height:1px;background:#3e3e3e;"></div>
<div class="a" style="left:1085px;top:150px;width:1px;height:4px;background:#333333;"></div>
<div class="a" style="left:1087px;top:150px;width:1px;height:4px;background:#333333;"></div>
<div class="a" style="left:1089px;top:150px;width:1px;height:4px;background:#333333;"></div>
<div class="a" style="left:1091px;top:150px;width:1px;height:4px;background:#333333;"></div>
<div class="a" style="left:1093px;top:150px;width:1px;height:4px;background:#333333;"></div>
<div class="a" style="left:1095px;top:150px;width:1px;height:4px;background:#333333;"></div>
<div class="a" style="left:1097px;top:150px;width:1px;height:4px;background:#333333;"></div>
<div class="a" style="left:1099px;top:150px;width:1px;height:4px;background:#333333;"></div>
<div class="a" style="left:1101px;top:150px;width:1px;height:4px;background:#333333;"></div>
<svg class="a" style="left:1086px;top:163px;" width="18" height="13" viewBox="0 0 18 13"><rect x="0.6" y="0.6" width="16.8" height="11.8" fill="none" stroke="#c9c9c9" stroke-width="1.2"/><rect x="2" y="2" width="4.3" height="4" fill="#c9c9c9"/><rect x="7" y="2" width="4.3" height="4" fill="#8a8a8a"/><rect x="12" y="2" width="4.3" height="4" fill="#c9c9c9"/><rect x="2" y="7" width="4.3" height="4" fill="#c9c9c9"/><rect x="7" y="7" width="4.3" height="4" fill="#c9c9c9"/><rect x="12" y="7" width="4.3" height="4" fill="#c9c9c9"/></svg>
<svg class="a" style="left:1087px;top:186px;" width="16" height="20" viewBox="0 0 16 20"><rect x="3" y="11" width="10" height="8" fill="#c9c9c9"/><path d="M5 11 L3 3 M8 11 L8 2 M11 11 L13 4" stroke="#c9c9c9" stroke-width="1.3"/><circle cx="3" cy="3" r="2" fill="#c9c9c9"/><circle cx="13" cy="4" r="2" fill="#c9c9c9"/><circle cx="8" cy="2" r="1.5" fill="#c9c9c9"/></svg>
<svg class="a" style="left:1086px;top:214px;" width="18" height="19" viewBox="0 0 18 19"><circle cx="9" cy="5" r="4.2" fill="#c9c9c9"/><circle cx="4.5" cy="11" r="4.2" fill="#c9c9c9"/><circle cx="13.5" cy="11" r="4.2" fill="#c9c9c9"/><path d="M9 9 L11 18 L7 18 Z" fill="#c9c9c9"/></svg>
<div class="a" style="left:1181px;top:76px;width:58px;height:27px;background:#474747;border-left:1px solid #3d3d3d;border-right:1px solid #3d3d3d"></div>
<span class="t" id="t37" style="left:1124.50px;top:83.00px;font-size:11.5px;color:#f0f0f0;font-weight:700;font-family:'Liberation Sans',sans-serif;transform:scaleX(0.8349);transform-origin:0 0;">Properties</span>
<span class="t" id="t38" style="left:1190.50px;top:83.00px;font-size:11.5px;color:#ababab;font-weight:700;font-family:'Liberation Sans',sans-serif;transform:scaleX(0.8028);transform-origin:0 0;">Libraries</span>
<div class="a" style="left:1353px;top:103px;width:9px;height:625px;background:#4d4d4d;"></div>
<div class="a" style="left:1354px;top:118px;width:7px;height:465px;background:#5c5c5c;"></div>
<svg class="a" style="left:1354.0px;top:107.25px;" width="7" height="5.5" viewBox="0 0 7 5.5"><polyline points="0.8,3.5 3.5,1 6.2,3.5" fill="none" stroke="#9a9a9a" stroke-width="1.3"/></svg>
<span class="t" id="t39" style="left:1125.00px;top:116.00px;font-size:11px;color:#c6c6c6;font-weight:700;font-family:'Liberation Sans',sans-serif;transform:scaleX(0.8448);transform-origin:0 0;">Type</span>
<div class="a" style="left:1114px;top:135px;width:239px;height:2px;background:#4a4a4a;"></div>
<span class="t" id="t40" style="left:1125.00px;top:150.00px;font-size:11px;color:#c6c6c6;font-weight:700;font-family:'Liberation Sans',sans-serif;transform:scaleX(0.8365);transform-origin:0 0;">Transform</span>
<svg class="a" style="left:1125px;top:182px;" width="20" height="19" viewBox="0 0 20 19"><g fill="none" stroke="#d0d0d0" stroke-width="1"><rect x="0.5" y="0.5" width="4" height="4"/><rect x="7.5" y="0.5" width="4" height="4"/><rect x="14.5" y="0.5" width="4" height="4"/><rect x="0.5" y="7.5" width="4" height="4"/><rect x="14.5" y="7.5" width="4" height="4"/><rect x="0.5" y="14.5" width="4" height="4"/><rect x="7.5" y="14.5" width="4" height="4"/><rect x="14.5" y="14.5" width="4" height="4"/><path d="M4.5 2.5 L7.5 2.5 M11.5 2.5 L14.5 2.5 M4.5 16.5 L7.5 16.5 M11.5 16.5 L14.5 16.5 M2.5 4.5 L2.5 7.5 M2.5 11.5 L2.5 14.5 M16.5 4.5 L16.5 7.5 M16.5 11.5 L16.5 14.5"/></g><rect x="7" y="7" width="5" height="5" fill="#e8e8e8"/></svg>
<span class="t" id="t41" style="left:1154.50px;top:173.00px;font-size:11px;color:#c6c6c6;font-weight:700;font-family:'Liberation Sans',sans-serif;transform:scaleX(0.8636);transform-origin:0 0;">X:</span>
<div class="a" style="left:1170px;top:169px;width:54px;height:19px;background:#474747;border:1px solid #4e4e4e"></div>
<span class="t" id="t42" style="left:1175.00px;top:172.00px;font-size:11px;color:#f0f0f0;font-weight:400;-webkit-text-stroke:0.25px #f0f0f0;font-family:'Liberation Sans',sans-serif;transform:scaleX(0.8536);transform-origin:0 0;">437.3896 p</span>
<span class="t" id="t43" style="left:1154.50px;top:198.00px;font-size:11px;color:#c6c6c6;font-weight:700;font-family:'Liberation Sans',sans-serif;transform:scaleX(0.9325);transform-origin:0 0;">Y:</span>
<div class="a" style="left:1170px;top:195px;width:54px;height:19px;background:#474747;border:1px solid #4e4e4e"></div>
<span class="t" id="t44" style="left:1175.00px;top:197.00px;font-size:11px;color:#f0f0f0;font-weight:400;-webkit-text-stroke:0.25px #f0f0f0;font-family:'Liberation Sans',sans-serif;transform:scaleX(0.8536);transform-origin:0 0;">247.6121 p</span>
<span class="t" id="t45" style="left:1241.00px;top:173.00px;font-size:11px;color:#c6c6c6;font-weight:700;font-family:'Liberation Sans',sans-serif;transform:scaleX(0.9019);transform-origin:0 0;">W:</span>
<div class="a" style="left:1259px;top:169px;width:54px;height:19px;background:#474747;border:1px solid #4e4e4e"></div>
<span class="t" id="t46" style="left:1264.00px;top:172.00px;font-size:11px;color:#f0f0f0;font-weight:400;-webkit-text-stroke:0.25px #f0f0f0;font-family:'Liberation Sans',sans-serif;transform:scaleX(0.8536);transform-origin:0 0;">464.3984 p</span>
<span class="t" id="t47" style="left:1241.00px;top:198.00px;font-size:11px;color:#c6c6c6;font-weight:700;font-family:'Liberation Sans',sans-serif;transform:scaleX(0.9044);transform-origin:0 0;">H:</span>
<div class="a" style="left:1259px;top:195px;width:54px;height:19px;background:#474747;border:1px solid #4e4e4e"></div>
<span class="t" id="t48" style="left:1264.00px;top:197.00px;font-size:11px;color:#f0f0f0;font-weight:400;-webkit-text-stroke:0.25px #f0f0f0;font-family:'Liberation Sans',sans-serif;transform:scaleX(0.8654);transform-origin:0 0;">92.5405 pt</span>
<svg class="a" style="left:1329px;top:184px;" width="15" height="17" viewBox="0 0 15 17"><path d="M6 4 Q8 1 10.5 2.5 Q13 4 11.5 7 L10 9.5 M5 8 L3.5 10.5 Q2 13 4.5 14.5 Q7 16 9 13" fill="none" stroke="#c9c9c9" stroke-width="1.6"/><path d="M1 1.5 L14 15.5" stroke="#c9c9c9" stroke-width="1.4"/></svg>
<svg class="a" style="left:1150px;top:223px;" width="12" height="10" viewBox="0 0 12 10"><path d="M0.7 9.3 L11 9.3 M0.7 9.3 L8 0.8 M5 5 Q7 6.5 6.8 9.3" fill="none" stroke="#c9c9c9" stroke-width="1.3"/></svg>
<div class="a" style="left:1163px;top:227px;width:1.5px;height:1.5px;background:#c9c9c9;"></div>
<div class="a" style="left:1163px;top:231px;width:1.5px;height:1.5px;background:#c9c9c9;"></div>
<div class="a" style="left:1168px;top:221px;width:36px;height:19px;background:#474747;border:1px solid #4e4e4e"></div>
<span class="t" id="t49" style="left:1171.00px;top:223.00px;font-size:11px;color:#f0f0f0;font-weight:400;-webkit-text-stroke:0.25px #f0f0f0;font-family:'Liberation Sans',sans-serif;transform:scaleX(0.9496);transform-origin:0 0;">0°</span>
<div class="a" style="left:1205px;top:221px;width:18px;height:19px;background:#4b4b4b;"></div>
<svg class="a" style="left:1210.0px;top:228.0px;" width="8" height="6.0" viewBox="0 0 8 6.0"><polyline points="0.8,1 4.0,4.0 7.2,1" fill="none" stroke="#d8d8d8" stroke-width="1.6"/></svg>
<svg class="a" style="left:1266px;top:227px;" width="14" height="10" viewBox="0 0 14 10"><path d="M0.7 0.7 L5 5 L0.7 9.3 Z" fill="none" stroke="#c9c9c9" stroke-width="1.2"/><path d="M13.3 0.7 L9 5 L13.3 9.3 Z" fill="#c9c9c9"/><path d="M7 0 L7 10" stroke="#c9c9c9" stroke-width="1" stroke-dasharray="1.5 1"/></svg>
<svg class="a" style="left:1290px;top:226px;" width="14" height="12" viewBox="0 0 14 12"><path d="M1 0.7 L13 0.7 L7 5 Z" fill="#c9c9c9"/><path d="M1 11.3 L13 11.3 L7 7 Z" fill="none" stroke="#c9c9c9" stroke-width="1.2"/><path d="M0 6 L14 6" stroke="#c9c9c9" stroke-width="1" stroke-dasharray="1.5 1"/></svg>
<div class="a" style="left:1332px;top:250.5px;width:3.2px;height:3.2px;border-radius:2px;background:#c8c8c8"></div>
<div class="a" style="left:1337px;top:250.5px;width:3.2px;height:3.2px;border-radius:2px;background:#c8c8c8"></div>
<div class="a" style="left:1342px;top:250.5px;width:3.2px;height:3.2px;border-radius:2px;background:#c8c8c8"></div>
<div class="a" style="left:1114px;top:261px;width:239px;height:2px;background:#4a4a4a;"></div>
<span class="t" id="t50" style="left:1125.00px;top:275.00px;font-size:11px;color:#c6c6c6;font-weight:700;font-family:'Liberation Sans',sans-serif;transform:scaleX(0.8256);transform-origin:0 0;">Appearance</span>
<div class="a" style="left:1125px;top:300px;width:17px;height:17px;background:#f05a28;border:1px solid #f0f0f0"></div>
<span class="t" id="t51" style="left:1154.50px;top:303.00px;font-size:11px;color:#c6c6c6;font-weight:700;font-family:'Liberation Sans',sans-serif;transform:scaleX(0.8810);transform-origin:0 0;">Fill</span>
<svg class="a" style="left:1206px;top:299px;" width="17" height="16" viewBox="0 0 17 16"><path d="M8.5 0.5 L16.5 15.5 L0.5 15.5 Z" fill="#d0d0d0"/><rect x="7.5" y="5" width="2" height="6" fill="#535353"/><rect x="7.5" y="12" width="2" height="2" fill="#535353"/></svg>
<svg class="a" style="left:1230px;top:300px;" width="15" height="15" viewBox="0 0 15 15"><circle cx="7.5" cy="7.5" r="6.5" fill="none" stroke="#d0d0d0" stroke-width="1.5"/><rect x="6.6" y="6" width="1.9" height="5.5" fill="#d0d0d0"/><rect x="6.6" y="3.2" width="1.9" height="1.9" fill="#d0d0d0"/></svg>
<div class="a" style="left:1332px;top:422.5px;width:3.2px;height:3.2px;border-radius:2px;background:#c8c8c8"></div>
<div class="a" style="left:1337px;top:422.5px;width:3.2px;height:3.2px;border-radius:2px;background:#c8c8c8"></div>
<div class="a" style="left:1342px;top:422.5px;width:3.2px;height:3.2px;border-radius:2px;background:#c8c8c8"></div>
<div class="a" style="left:1114px;top:433px;width:239px;height:2px;background:#4a4a4a;"></div>
<div class="a" style="left:1126px;top:471px;width:200px;height:18px;background:#474747;border:1px solid #4e4e4e"></div>
<span class="t" id="t52" style="left:1152.00px;top:474.00px;font-size:11px;color:#f0f0f0;font-weight:400;-webkit-text-stroke:0.25px #f0f0f0;font-family:'Liberation Sans',sans-serif;transform:scaleX(0.8837);transform-origin:0 0;">Myriad Pro</span>
<svg class="a" style="left:1131px;top:474px;" width="22" height="12" viewBox="0 0 22 12"><circle cx="4.5" cy="4.5" r="3.6" fill="none" stroke="#9a9a9a" stroke-width="1.3"/><line x1="7" y1="7" x2="10" y2="10.5" stroke="#9a9a9a" stroke-width="1.4"/><polyline points="12,4 15,7 18,4" fill="none" stroke="#9a9a9a" stroke-width="1.2"/></svg>
<div class="a" style="left:1326px;top:471px;width:18px;height:18px;background:#4b4b4b;"></div>
<svg class="a" style="left:1331.0px;top:477.0px;" width="8" height="6.0" viewBox="0 0 8 6.0"><polyline points="0.8,1 4.0,4.0 7.2,1" fill="none" stroke="#d8d8d8" stroke-width="1.6"/></svg>
<div class="a" style="left:1126px;top:497px;width:200px;height:18px;background:#474747;border:1px solid #4e4e4e"></div>
<span class="t" id="t53" style="left:1131.00px;top:500.00px;font-size:11px;color:#f0f0f0;font-weight:700;font-family:'Liberation Sans',sans-serif;transform:scaleX(0.8787);transform-origin:0 0;">Regular</span>
<div class="a" style="left:1326px;top:497px;width:18px;height:18px;background:#4b4b4b;"></div>
<svg class="a" style="left:1331.0px;top:503.0px;" width="8" height="6.0" viewBox="0 0 8 6.0"><polyline points="0.8,1 4.0,4.0 7.2,1" fill="none" stroke="#d8d8d8" stroke-width="1.6"/></svg>
<svg class="a" style="left:1124px;top:523px;" width="20" height="16" viewBox="0 0 20 16"><g fill="#c9c9c9"><rect x="6" y="0.5" width="13" height="2.8"/><rect x="6" y="0.5" width="1.4" height="4.5"/><rect x="17.6" y="0.5" width="1.4" height="4.5"/><rect x="11.1" y="0.5" width="2.8" height="14"/><rect x="9.3" y="13.2" width="6.4" height="1.6"/><rect x="1" y="7" width="6.4" height="1.8"/><rect x="3.4" y="7" width="1.6" height="7.8"/><rect x="2.3" y="13.6" width="3.8" height="1.2"/></g></svg>
<div class="a" style="left:1147px;top:522px;width:17px;height:19px;background:#4b4b4b;"></div>
<svg class="a" style="left:1151.25px;top:523.875px;" width="8.5" height="6.25" viewBox="0 0 8.5 6.25"><polyline points="0.8,4.25 4.25,1 7.7,4.25" fill="none" stroke="#d8d8d8" stroke-width="1.3"/></svg>
<svg class="a" style="left:1151.25px;top:533.875px;" width="8.5" height="6.25" viewBox="0 0 8.5 6.25"><polyline points="0.8,1 4.25,4.25 7.7,1" fill="none" stroke="#d8d8d8" stroke-width="1.3"/></svg>
<div class="a" style="left:1164px;top:522px;width:45px;height:19px;background:#474747;border:1px solid #4e4e4e"></div>
<span class="t" id="t54" style="left:1168.00px;top:525.00px;font-size:11px;color:#f0f0f0;font-weight:400;-webkit-text-stroke:0.25px #f0f0f0;font-family:'Liberation Sans',sans-serif;transform:scaleX(0.9053);transform-origin:0 0;">85.13 pt</span>
<div class="a" style="left:1209px;top:522px;width:18px;height:19px;background:#4b4b4b;"></div>
<svg class="a" style="left:1214.0px;top:528.0px;" width="8" height="6.0" viewBox="0 0 8 6.0"><polyline points="0.8,1 4.0,4.0 7.2,1" fill="none" stroke="#d8d8d8" stroke-width="1.6"/></svg>
<svg class="a" style="left:1242px;top:521px;" width="20" height="19" viewBox="0 0 20 19"><g fill="none" stroke="#c9c9c9" stroke-width="1"><path d="M9.2 8.5 L12.5 1 L15.8 8.5 M10.3 6 L14.7 6 M8 9.5 L17 9.5"/><path d="M9.2 17.5 L12.5 10 L15.8 17.5 M10.3 15 L14.7 15 M8 18.5 L17 18.5"/><path d="M3 4.5 L3 17"/></g><path d="M0.8 6.5 L3 3.8 L5.2 6.5 Z M0.8 15 L3 17.7 L5.2 15 Z" fill="#c9c9c9"/></svg>
<div class="a" style="left:1264px;top:522px;width:17px;height:19px;background:#4b4b4b;"></div>
<svg class="a" style="left:1268.25px;top:523.875px;" width="8.5" height="6.25" viewBox="0 0 8.5 6.25"><polyline points="0.8,4.25 4.25,1 7.7,4.25" fill="none" stroke="#d8d8d8" stroke-width="1.3"/></svg>
<svg class="a" style="left:1268.25px;top:533.875px;" width="8.5" height="6.25" viewBox="0 0 8.5 6.25"><polyline points="0.8,1 4.25,4.25 7.7,1" fill="none" stroke="#d8d8d8" stroke-width="1.3"/></svg>
<div class="a" style="left:1282px;top:522px;width:44px;height:19px;background:#474747;border:1px solid #4e4e4e"></div>
<span class="t" id="t55" style="left:1285.00px;top:525.00px;font-size:11px;color:#f0f0f0;font-weight:400;-webkit-text-stroke:0.25px #f0f0f0;font-family:'Liberation Sans',sans-serif;transform:scaleX(0.8820);transform-origin:0 0;">(102.16 p</span>
<div class="a" style="left:1326px;top:522px;width:18px;height:19px;background:#4b4b4b;"></div>
<svg class="a" style="left:1331.0px;top:528.0px;" width="8" height="6.0" viewBox="0 0 8 6.0"><polyline points="0.8,1 4.0,4.0 7.2,1" fill="none" stroke="#d8d8d8" stroke-width="1.6"/></svg>
<svg class="a" style="left:1124px;top:548px;" width="20" height="19" viewBox="0 0 20 19"><g fill="none" stroke="#c9c9c9" stroke-width="1.15"><path d="M1.2 1.5 L4.8 12.5 L8.4 1.5"/><path d="M7 12.5 L10.2 1.5"/><path d="M9.3 12.5 L12.8 1.5 L16.3 12.5 M10.6 8.6 L15 8.6"/><path d="M11 16 L17 16"/></g><path d="M9 16 L12 14 L12 18 Z" fill="#c9c9c9"/></svg>
<div class="a" style="left:1147px;top:548px;width:17px;height:19px;background:#4b4b4b;"></div>
<svg class="a" style="left:1151.25px;top:549.875px;" width="8.5" height="6.25" viewBox="0 0 8.5 6.25"><polyline points="0.8,4.25 4.25,1 7.7,4.25" fill="none" stroke="#d8d8d8" stroke-width="1.3"/></svg>
<svg class="a" style="left:1151.25px;top:559.875px;" width="8.5" height="6.25" viewBox="0 0 8.5 6.25"><polyline points="0.8,1 4.25,4.25 7.7,1" fill="none" stroke="#d8d8d8" stroke-width="1.3"/></svg>
<div class="a" style="left:1164px;top:548px;width:45px;height:19px;background:#474747;border:1px solid #4e4e4e"></div>
<span class="t" id="t56" style="left:1168.00px;top:551.00px;font-size:11px;color:#f0f0f0;font-weight:400;-webkit-text-stroke:0.25px #f0f0f0;font-family:'Liberation Sans',sans-serif;transform:scaleX(0.9717);transform-origin:0 0;">Auto</span>
<div class="a" style="left:1209px;top:548px;width:18px;height:19px;background:#4b4b4b;"></div>
<svg class="a" style="left:1214.0px;top:554.0px;" width="8" height="6.0" viewBox="0 0 8 6.0"><polyline points="0.8,1 4.0,4.0 7.2,1" fill="none" stroke="#d8d8d8" stroke-width="1.6"/></svg>
<svg class="a" style="left:1242px;top:549px;" width="18" height="17" viewBox="0 0 18 17"><rect x="0" y="0" width="18" height="11" fill="#c9c9c9"/><g fill="none" stroke="#3c3c3c" stroke-width="1.5"><path d="M2 1.5 L5 9.5 L8 1.5 M8.5 9.5 L11.8 1.5 L15.1 9.5 M10 6.8 L13.6 6.8"/></g><path d="M2.5 14.7 L15.5 14.7" stroke="#c9c9c9" stroke-width="1.1"/><path d="M0 14.7 L3 12.5 L3 16.9 Z M18 14.7 L15 12.5 L15 16.9 Z" fill="#c9c9c9"/></svg>
<div class="a" style="left:1264px;top:548px;width:17px;height:19px;background:#4b4b4b;"></div>
<svg class="a" style="left:1268.25px;top:549.875px;" width="8.5" height="6.25" viewBox="0 0 8.5 6.25"><polyline points="0.8,4.25 4.25,1 7.7,4.25" fill="none" stroke="#d8d8d8" stroke-width="1.3"/></svg>
<svg class="a" style="left:1268.25px;top:559.875px;" width="8.5" height="6.25" viewBox="0 0 8.5 6.25"><polyline points="0.8,1 4.25,4.25 7.7,1" fill="none" stroke="#d8d8d8" stroke-width="1.3"/></svg>
<div class="a" style="left:1282px;top:548px;width:44px;height:19px;background:#474747;border:1px solid #4e4e4e"></div>
<span class="t" id="t57" style="left:1285.00px;top:551.00px;font-size:11px;color:#f0f0f0;font-weight:400;-webkit-text-stroke:0.25px #f0f0f0;font-family:'Liberation Sans',sans-serif;transform:scaleX(0.9796);transform-origin:0 0;">0</span>
<div class="a" style="left:1326px;top:548px;width:18px;height:19px;background:#4b4b4b;"></div>
<svg class="a" style="left:1331.0px;top:554.0px;" width="8" height="6.0" viewBox="0 0 8 6.0"><polyline points="0.8,1 4.0,4.0 7.2,1" fill="none" stroke="#d8d8d8" stroke-width="1.6"/></svg>
<div class="a" style="left:1332px;top:580.5px;width:3.2px;height:3.2px;border-radius:2px;background:#c8c8c8"></div>
<div class="a" style="left:1337px;top:580.5px;width:3.2px;height:3.2px;border-radius:2px;background:#c8c8c8"></div>
<div class="a" style="left:1342px;top:580.5px;width:3.2px;height:3.2px;border-radius:2px;background:#c8c8c8"></div>
<div class="a" style="left:1114px;top:589px;width:239px;height:3px;background:#4a4a4a;"></div>
<span class="t" id="t58" style="left:1125.00px;top:604.00px;font-size:11px;color:#c6c6c6;font-weight:700;font-family:'Liberation Sans',sans-serif;transform:scaleX(0.8269);transform-origin:0 0;">Paragraph</span>
<div class="a" style="left:1126px;top:628px;width:24px;height:24px;background:#2e2e2e;border-radius:2px"></div>
<svg class="a" style="left:1131px;top:633px;" width="16" height="14" viewBox="0 0 16 14"><rect x="0" y="0.0" width="15" height="1.3" fill="#f0f0f0"/><rect x="0" y="3.3" width="12" height="1.3" fill="#f0f0f0"/><rect x="0" y="6.6" width="15" height="1.3" fill="#f0f0f0"/><rect x="0" y="9.9" width="12" height="1.3" fill="#f0f0f0"/><rect x="0" y="13.2" width="15" height="1.3" fill="#f0f0f0"/></svg>
<svg class="a" style="left:1161px;top:633px;" width="16" height="14" viewBox="0 0 16 14"><rect x="0" y="0.0" width="16" height="1.3" fill="#d0d0d0"/><rect x="2" y="3.3" width="12" height="1.3" fill="#d0d0d0"/><rect x="0" y="6.6" width="16" height="1.3" fill="#d0d0d0"/><rect x="2" y="9.9" width="12" height="1.3" fill="#d0d0d0"/><rect x="0" y="13.2" width="16" height="1.3" fill="#d0d0d0"/></svg>
<svg class="a" style="left:1192px;top:633px;" width="16" height="14" viewBox="0 0 16 14"><rect x="0" y="0.0" width="15" height="1.3" fill="#d0d0d0"/><rect x="3" y="3.3" width="12" height="1.3" fill="#d0d0d0"/><rect x="0" y="6.6" width="15" height="1.3" fill="#d0d0d0"/><rect x="3" y="9.9" width="12" height="1.3" fill="#d0d0d0"/><rect x="0" y="13.2" width="15" height="1.3" fill="#d0d0d0"/></svg>
<svg class="a" style="left:1223px;top:633px;" width="16" height="14" viewBox="0 0 16 14"><rect x="0" y="0.0" width="15" height="1.3" fill="#d0d0d0"/><rect x="0" y="3.3" width="15" height="1.3" fill="#d0d0d0"/><rect x="0" y="6.6" width="15" height="1.3" fill="#d0d0d0"/><rect x="0" y="9.9" width="15" height="1.3" fill="#d0d0d0"/><rect x="0" y="13.2" width="10" height="1.3" fill="#d0d0d0"/></svg>
<svg class="a" style="left:1254px;top:633px;" width="16" height="14" viewBox="0 0 16 14"><rect x="0" y="0.0" width="15" height="1.3" fill="#d0d0d0"/><rect x="0" y="3.3" width="15" height="1.3" fill="#d0d0d0"/><rect x="0" y="6.6" width="15" height="1.3" fill="#d0d0d0"/><rect x="0" y="9.9" width="15" height="1.3" fill="#d0d0d0"/><rect x="2.5" y="13.2" width="10" height="1.3" fill="#d0d0d0"/></svg>
<svg class="a" style="left:1285px;top:633px;" width="16" height="14" viewBox="0 0 16 14"><rect x="0" y="0.0" width="15" height="1.3" fill="#d0d0d0"/><rect x="0" y="3.3" width="15" height="1.3" fill="#d0d0d0"/><rect x="0" y="6.6" width="15" height="1.3" fill="#d0d0d0"/><rect x="0" y="9.9" width="15" height="1.3" fill="#d0d0d0"/><rect x="5" y="13.2" width="10" height="1.3" fill="#d0d0d0"/></svg>
<svg class="a" style="left:1316px;top:633px;" width="16" height="14" viewBox="0 0 16 14"><rect x="0" y="0.0" width="15" height="1.3" fill="#d0d0d0"/><rect x="0" y="3.3" width="15" height="1.3" fill="#d0d0d0"/><rect x="0" y="6.6" width="15" height="1.3" fill="#d0d0d0"/><rect x="0" y="9.9" width="15" height="1.3" fill="#d0d0d0"/><rect x="0" y="13.2" width="15" height="1.3" fill="#d0d0d0"/></svg>
<div class="a" style="left:1332px;top:664.5px;width:3.2px;height:3.2px;border-radius:2px;background:#c8c8c8"></div>
<div class="a" style="left:1337px;top:664.5px;width:3.2px;height:3.2px;border-radius:2px;background:#c8c8c8"></div>
<div class="a" style="left:1342px;top:664.5px;width:3.2px;height:3.2px;border-radius:2px;background:#c8c8c8"></div>
<div class="a" style="left:1114px;top:674px;width:239px;height:3px;background:#4a4a4a;"></div>
<span class="t" id="t59" style="left:1125.00px;top:684.00px;font-size:11px;color:#c6c6c6;font-weight:700;font-family:'Liberation Sans',sans-serif;transform:scaleX(0.8208);transform-origin:0 0;">Bullets And Numbering</span>
<svg class="a" style="left:1130px;top:712px;" width="18" height="16" viewBox="0 0 18 16"><circle cx="2" cy="3" r="2" fill="#c9c9c9"/><circle cx="2" cy="12" r="2" fill="#c9c9c9"/><rect x="5" y="0.5" width="12" height="1.3" fill="#c9c9c9"/><rect x="5" y="3.5" width="12" height="1.3" fill="#c9c9c9"/><rect x="5" y="9.5" width="12" height="1.3" fill="#c9c9c9"/><rect x="5" y="12.5" width="12" height="1.3" fill="#c9c9c9"/></svg>
<svg class="a" style="left:1149.0px;top:716.0px;" width="8" height="6.0" viewBox="0 0 8 6.0"><polyline points="0.8,1 4.0,4.0 7.2,1" fill="none" stroke="#c8c8c8" stroke-width="1.4"/></svg>
<svg class="a" style="left:1166px;top:711px;" width="18" height="17" viewBox="0 0 18 17"><text x="0" y="8" font-family="Liberation Sans" font-size="8" fill="#c9c9c9">1</text><text x="0" y="17" font-family="Liberation Sans" font-size="8" fill="#c9c9c9">2</text><rect x="5" y="2.5" width="12" height="1.3" fill="#c9c9c9"/><rect x="5" y="5.5" width="12" height="1.3" fill="#c9c9c9"/><rect x="5" y="11.5" width="12" height="1.3" fill="#c9c9c9"/><rect x="5" y="14.5" width="12" height="1.3" fill="#c9c9c9"/></svg>
<svg class="a" style="left:1185.0px;top:716.0px;" width="8" height="6.0" viewBox="0 0 8 6.0"><polyline points="0.8,1 4.0,4.0 7.2,1" fill="none" stroke="#c8c8c8" stroke-width="1.4"/></svg>
<svg class="a" style="left:1353.5px;top:716.25px;" width="7" height="5.5" viewBox="0 0 7 5.5"><polyline points="0.8,1 3.5,3.5 6.2,1" fill="none" stroke="#9a9a9a" stroke-width="1.3"/></svg>
<div class="a" style="left:74px;top:711px;width:1001px;height:17px;background:#535353;"></div>
<div class="a" style="left:78px;top:712px;width:51px;height:16px;background:#474747;"></div>
<span class="t" id="t60" style="left:81.00px;top:715.00px;font-size:11px;color:#e8e8e8;font-weight:400;-webkit-text-stroke:0.25px #e8e8e8;font-family:'Liberation Sans',sans-serif;transform:scaleX(0.8710);transform-origin:0 0;">66.67%</span>
<div class="a" style="left:129px;top:712px;width:16px;height:16px;background:#4b4b4b;"></div>
<svg class="a" style="left:133.5px;top:718.75px;" width="7" height="5.5" viewBox="0 0 7 5.5"><polyline points="0.8,1 3.5,3.5 6.2,1" fill="none" stroke="#e0e0e0" stroke-width="1.5"/></svg>
<div class="a" style="left:148px;top:712px;width:1px;height:16px;background:#3e3e3e;"></div>
<div class="a" style="left:151px;top:712px;width:50px;height:16px;background:#474747;"></div>
<span class="t" id="t61" style="left:154.00px;top:715.00px;font-size:11px;color:#e8e8e8;font-weight:400;-webkit-text-stroke:0.25px #e8e8e8;font-family:'Liberation Sans',sans-serif;transform:scaleX(0.9496);transform-origin:0 0;">0°</span>
<div class="a" style="left:201px;top:712px;width:17px;height:16px;background:#4b4b4b;"></div>
<svg class="a" style="left:206.0px;top:718.75px;" width="7" height="5.5" viewBox="0 0 7 5.5"><polyline points="0.8,1 3.5,3.5 6.2,1" fill="none" stroke="#e0e0e0" stroke-width="1.5"/></svg>
<div class="a" style="left:220px;top:712px;width:39px;height:16px;background:#4e4e4e;"></div>
<svg class="a" style="left:228px;top:716px;" width="8" height="8" viewBox="0 0 8 8"><rect x="0" y="0" width="1.5" height="8" fill="#6a6a6a"/><path d="M8 0 L2.5 4 L8 8 Z" fill="#6a6a6a"/></svg>
<svg class="a" style="left:243px;top:716px;" width="6" height="8" viewBox="0 0 6 8"><path d="M6 0 L0.5 4 L6 8 Z" fill="#6a6a6a"/></svg>
<div class="a" style="left:261px;top:712px;width:41px;height:16px;background:#474747;"></div>
<span class="t" id="t62" style="left:264.00px;top:715.00px;font-size:11px;color:#e8e8e8;font-weight:400;-webkit-text-stroke:0.25px #e8e8e8;font-family:'Liberation Sans',sans-serif;transform:scaleX(0.9796);transform-origin:0 0;">1</span>
<div class="a" style="left:302px;top:712px;width:17px;height:16px;background:#4b4b4b;"></div>
<svg class="a" style="left:307.0px;top:718.75px;" width="7" height="5.5" viewBox="0 0 7 5.5"><polyline points="0.8,1 3.5,3.5 6.2,1" fill="none" stroke="#e0e0e0" stroke-width="1.5"/></svg>
<div class="a" style="left:320px;top:712px;width:38px;height:16px;background:#4e4e4e;"></div>
<svg class="a" style="left:323px;top:716px;" width="6" height="8" viewBox="0 0 6 8"><path d="M0 0 L5.5 4 L0 8 Z" fill="#6a6a6a"/></svg>
<svg class="a" style="left:331px;top:716px;" width="8" height="8" viewBox="0 0 8 8"><path d="M0 0 L5.5 4 L0 8 Z" fill="#6a6a6a"/><rect x="6.5" y="0" width="1.5" height="8" fill="#6a6a6a"/></svg>
<div class="a" style="left:360px;top:712px;width:205px;height:16px;background:#4e4e4e;"></div>
<span class="t" id="t63" style="left:441.00px;top:716.00px;font-size:11px;color:#d8d8d8;font-weight:400;-webkit-text-stroke:0.25px #d8d8d8;font-family:'Liberation Sans',sans-serif;transform:scaleX(0.8837);transform-origin:0 0;">Selection</span>
<svg class="a" style="left:567px;top:716px;" width="7" height="10" viewBox="0 0 7 10"><path d="M0 0 L7 5 L0 10 Z" fill="#d8d8d8"/></svg>
<div class="a" style="left:578px;top:712px;width:1px;height:16px;background:#454545;"></div>
<svg class="a" style="left:583px;top:716px;" width="6" height="10" viewBox="0 0 6 10"><polyline points="5,1 1,5 5,9" fill="none" stroke="#bdbdbd" stroke-width="1.3"/></svg>
<div class="a" style="left:803px;top:712px;width:26px;height:14px;background:#5e5e5e;border-radius:7px"></div>
<div class="a" style="left:915px;top:231px;width:193px;height:497px;background:#f0f0f0;border:1px solid #cfcfcf;box-shadow:2px 2px 3px rgba(0,0,0,0.25)"></div>
<div class="a" style="left:918px;top:324px;width:188px;height:20px;background:#91c9f7;"></div>
<div class="a" style="left:945px;top:479px;width:157px;height:1px;background:#d7d7d7;"></div>
<span class="t" id="t64" style="left:950.00px;top:238.00px;font-size:13px;color:#6d6d6d;font-weight:400;font-family:'Liberation Sans',sans-serif;-webkit-text-stroke:0.2px #6d6d6d;transform:scaleX(0.9785);transform-origin:0 0;">Illustrator Effects</span>
<span class="t" id="t65" style="left:950.00px;top:260.00px;font-size:13px;color:#0a0a0a;font-weight:400;font-family:'Liberation Sans',sans-serif;-webkit-text-stroke:0.2px #0a0a0a;transform:scaleX(0.8954);transform-origin:0 0;">3D and Materials</span>
<svg class="a" style="left:1091.5px;top:262.0px;" width="6.0" height="8" viewBox="0 0 6.0 8"><polyline points="1,0.8 4.0,4.0 1,7.2" fill="none" stroke="#333333" stroke-width="1.2"/></svg>
<span class="t" id="t66" style="left:950.00px;top:282.00px;font-size:13px;color:#0a0a0a;font-weight:400;font-family:'Liberation Sans',sans-serif;-webkit-text-stroke:0.2px #0a0a0a;transform:scaleX(0.8993);transform-origin:0 0;">Convert to Shape</span>
<svg class="a" style="left:1091.5px;top:284.0px;" width="6.0" height="8" viewBox="0 0 6.0 8"><polyline points="1,0.8 4.0,4.0 1,7.2" fill="none" stroke="#333333" stroke-width="1.2"/></svg>
<span class="t" id="t67" style="left:950.00px;top:304.00px;font-size:13px;color:#0a0a0a;font-weight:400;font-family:'Liberation Sans',sans-serif;-webkit-text-stroke:0.2px #0a0a0a;transform:scaleX(0.9079);transform-origin:0 0;">Crop Marks</span>
<span class="t" id="t68" style="left:950.00px;top:326.00px;font-size:13px;color:#0a0a0a;font-weight:400;font-family:'Liberation Sans',sans-serif;-webkit-text-stroke:0.2px #0a0a0a;transform:scaleX(0.9199);transform-origin:0 0;">Distort &amp; Transform</span>
<svg class="a" style="left:1091.5px;top:328.0px;" width="6.0" height="8" viewBox="0 0 6.0 8"><polyline points="1,0.8 4.0,4.0 1,7.2" fill="none" stroke="#333333" stroke-width="1.2"/></svg>
<span class="t" id="t69" style="left:950.00px;top:348.00px;font-size:13px;color:#0a0a0a;font-weight:400;font-family:'Liberation Sans',sans-serif;-webkit-text-stroke:0.2px #0a0a0a;transform:scaleX(0.8972);transform-origin:0 0;">Path</span>
<svg class="a" style="left:1091.5px;top:350.0px;" width="6.0" height="8" viewBox="0 0 6.0 8"><polyline points="1,0.8 4.0,4.0 1,7.2" fill="none" stroke="#333333" stroke-width="1.2"/></svg>
<span class="t" id="t70" style="left:950.00px;top:370.00px;font-size:13px;color:#0a0a0a;font-weight:400;font-family:'Liberation Sans',sans-serif;-webkit-text-stroke:0.2px #0a0a0a;transform:scaleX(0.9280);transform-origin:0 0;">Pathfinder</span>
<svg class="a" style="left:1091.5px;top:372.0px;" width="6.0" height="8" viewBox="0 0 6.0 8"><polyline points="1,0.8 4.0,4.0 1,7.2" fill="none" stroke="#333333" stroke-width="1.2"/></svg>
<span class="t" id="t71" style="left:950.00px;top:392.00px;font-size:13px;color:#0a0a0a;font-weight:400;font-family:'Liberation Sans',sans-serif;-webkit-text-stroke:0.2px #0a0a0a;transform:scaleX(0.8365);transform-origin:0 0;">Rasterize...</span>
<span class="t" id="t72" style="left:950.00px;top:414.00px;font-size:13px;color:#0a0a0a;font-weight:400;font-family:'Liberation Sans',sans-serif;-webkit-text-stroke:0.2px #0a0a0a;transform:scaleX(0.8617);transform-origin:0 0;">Stylize</span>
<svg class="a" style="left:1091.5px;top:416.0px;" width="6.0" height="8" viewBox="0 0 6.0 8"><polyline points="1,0.8 4.0,4.0 1,7.2" fill="none" stroke="#333333" stroke-width="1.2"/></svg>
<span class="t" id="t73" style="left:950.00px;top:436.00px;font-size:13px;color:#0a0a0a;font-weight:400;font-family:'Liberation Sans',sans-serif;-webkit-text-stroke:0.2px #0a0a0a;transform:scaleX(0.8275);transform-origin:0 0;">SVG Filters</span>
<svg class="a" style="left:1091.5px;top:438.0px;" width="6.0" height="8" viewBox="0 0 6.0 8"><polyline points="1,0.8 4.0,4.0 1,7.2" fill="none" stroke="#333333" stroke-width="1.2"/></svg>
<span class="t" id="t74" style="left:950.00px;top:458.00px;font-size:13px;color:#0a0a0a;font-weight:400;font-family:'Liberation Sans',sans-serif;-webkit-text-stroke:0.2px #0a0a0a;transform:scaleX(0.8830);transform-origin:0 0;">Warp</span>
<svg class="a" style="left:1091.5px;top:460.0px;" width="6.0" height="8" viewBox="0 0 6.0 8"><polyline points="1,0.8 4.0,4.0 1,7.2" fill="none" stroke="#333333" stroke-width="1.2"/></svg>
<span class="t" id="t75" style="left:950.00px;top:487.00px;font-size:13px;color:#6d6d6d;font-weight:400;font-family:'Liberation Sans',sans-serif;-webkit-text-stroke:0.2px #6d6d6d;transform:scaleX(0.9071);transform-origin:0 0;">Photoshop Effects</span>
<span class="t" id="t76" style="left:950.00px;top:509.00px;font-size:13px;color:#0a0a0a;font-weight:400;font-family:'Liberation Sans',sans-serif;-webkit-text-stroke:0.2px #0a0a0a;transform:scaleX(0.8840);transform-origin:0 0;">Effect Gallery...</span>
<span class="t" id="t77" style="left:950.00px;top:531.00px;font-size:13px;color:#0a0a0a;font-weight:400;font-family:'Liberation Sans',sans-serif;-webkit-text-stroke:0.2px #0a0a0a;transform:scaleX(0.9487);transform-origin:0 0;">Artistic</span>
<svg class="a" style="left:1091.5px;top:533.0px;" width="6.0" height="8" viewBox="0 0 6.0 8"><polyline points="1,0.8 4.0,4.0 1,7.2" fill="none" stroke="#333333" stroke-width="1.2"/></svg>
<span class="t" id="t78" style="left:950.00px;top:553.00px;font-size:13px;color:#0a0a0a;font-weight:400;font-family:'Liberation Sans',sans-serif;-webkit-text-stroke:0.2px #0a0a0a;transform:scaleX(0.9081);transform-origin:0 0;">Blur</span>
<svg class="a" style="left:1091.5px;top:555.0px;" width="6.0" height="8" viewBox="0 0 6.0 8"><polyline points="1,0.8 4.0,4.0 1,7.2" fill="none" stroke="#333333" stroke-width="1.2"/></svg>
<span class="t" id="t79" style="left:950.00px;top:575.00px;font-size:13px;color:#0a0a0a;font-weight:400;font-family:'Liberation Sans',sans-serif;-webkit-text-stroke:0.2px #0a0a0a;transform:scaleX(0.8573);transform-origin:0 0;">Brush Strokes</span>
<svg class="a" style="left:1091.5px;top:577.0px;" width="6.0" height="8" viewBox="0 0 6.0 8"><polyline points="1,0.8 4.0,4.0 1,7.2" fill="none" stroke="#333333" stroke-width="1.2"/></svg>
<span class="t" id="t80" style="left:950.00px;top:597.00px;font-size:13px;color:#0a0a0a;font-weight:400;font-family:'Liberation Sans',sans-serif;-webkit-text-stroke:0.2px #0a0a0a;transform:scaleX(0.9318);transform-origin:0 0;">Distort</span>
<svg class="a" style="left:1091.5px;top:599.0px;" width="6.0" height="8" viewBox="0 0 6.0 8"><polyline points="1,0.8 4.0,4.0 1,7.2" fill="none" stroke="#333333" stroke-width="1.2"/></svg>
<span class="t" id="t81" style="left:950.00px;top:619.00px;font-size:13px;color:#0a0a0a;font-weight:400;font-family:'Liberation Sans',sans-serif;-webkit-text-stroke:0.2px #0a0a0a;transform:scaleX(0.8865);transform-origin:0 0;">Pixelate</span>
<svg class="a" style="left:1091.5px;top:621.0px;" width="6.0" height="8" viewBox="0 0 6.0 8"><polyline points="1,0.8 4.0,4.0 1,7.2" fill="none" stroke="#333333" stroke-width="1.2"/></svg>
<span class="t" id="t82" style="left:950.00px;top:641.00px;font-size:13px;color:#0a0a0a;font-weight:400;font-family:'Liberation Sans',sans-serif;-webkit-text-stroke:0.2px #0a0a0a;transform:scaleX(0.8805);transform-origin:0 0;">Sketch</span>
<svg class="a" style="left:1091.5px;top:643.0px;" width="6.0" height="8" viewBox="0 0 6.0 8"><polyline points="1,0.8 4.0,4.0 1,7.2" fill="none" stroke="#333333" stroke-width="1.2"/></svg>
<span class="t" id="t83" style="left:950.00px;top:663.00px;font-size:13px;color:#0a0a0a;font-weight:400;font-family:'Liberation Sans',sans-serif;-webkit-text-stroke:0.2px #0a0a0a;transform:scaleX(0.8617);transform-origin:0 0;">Stylize</span>
<svg class="a" style="left:1091.5px;top:665.0px;" width="6.0" height="8" viewBox="0 0 6.0 8"><polyline points="1,0.8 4.0,4.0 1,7.2" fill="none" stroke="#333333" stroke-width="1.2"/></svg>
<span class="t" id="t84" style="left:950.00px;top:685.00px;font-size:13px;color:#0a0a0a;font-weight:400;font-family:'Liberation Sans',sans-serif;-webkit-text-stroke:0.2px #0a0a0a;transform:scaleX(0.8912);transform-origin:0 0;">Texture</span>
<svg class="a" style="left:1091.5px;top:687.0px;" width="6.0" height="8" viewBox="0 0 6.0 8"><polyline points="1,0.8 4.0,4.0 1,7.2" fill="none" stroke="#333333" stroke-width="1.2"/></svg>
<span class="t" id="t85" style="left:950.00px;top:707.00px;font-size:13px;color:#0a0a0a;font-weight:400;font-family:'Liberation Sans',sans-serif;-webkit-text-stroke:0.2px #0a0a0a;transform:scaleX(0.9087);transform-origin:0 0;">Video</span>
<svg class="a" style="left:1091.5px;top:709.0px;" width="6.0" height="8" viewBox="0 0 6.0 8"><polyline points="1,0.8 4.0,4.0 1,7.2" fill="none" stroke="#333333" stroke-width="1.2"/></svg>
<div class="a" style="left:1103px;top:319px;width:178px;height:160px;background:#f0f0f0;border:1px solid #cfcfcf;box-shadow:2px 2px 3px rgba(0,0,0,0.25)"></div>
<div class="a" style="left:1107px;top:391px;width:170px;height:20px;background:#91c9f7;"></div>
<span class="t" id="t86" style="left:1138.50px;top:326.00px;font-size:13px;color:#0a0a0a;font-weight:400;font-family:'Liberation Sans',sans-serif;-webkit-text-stroke:0.2px #000;transform:scaleX(0.8635);transform-origin:0 0;">Free Distort...</span>
<span class="t" id="t87" style="left:1138.50px;top:348.00px;font-size:13px;color:#0a0a0a;font-weight:400;font-family:'Liberation Sans',sans-serif;-webkit-text-stroke:0.2px #000;transform:scaleX(0.8985);transform-origin:0 0;">Pucker &amp; Bloat...</span>
<span class="t" id="t88" style="left:1138.50px;top:370.00px;font-size:13px;color:#0a0a0a;font-weight:400;font-family:'Liberation Sans',sans-serif;-webkit-text-stroke:0.2px #000;transform:scaleX(0.8804);transform-origin:0 0;">Roughen...</span>
<span class="t" id="t89" style="left:1138.50px;top:392.00px;font-size:13px;color:#0a0a0a;font-weight:400;font-family:'Liberation Sans',sans-serif;-webkit-text-stroke:0.2px #000;transform:scaleX(0.8837);transform-origin:0 0;">Transform...</span>
<span class="t" id="t90" style="left:1138.50px;top:414.00px;font-size:13px;color:#0a0a0a;font-weight:400;font-family:'Liberation Sans',sans-serif;-webkit-text-stroke:0.2px #000;transform:scaleX(0.8467);transform-origin:0 0;">Tweak...</span>
<span class="t" id="t91" style="left:1138.50px;top:436.00px;font-size:13px;color:#0a0a0a;font-weight:400;font-family:'Liberation Sans',sans-serif;-webkit-text-stroke:0.2px #000;transform:scaleX(0.9146);transform-origin:0 0;">Twist...</span>
<span class="t" id="t92" style="left:1138.50px;top:458.00px;font-size:13px;color:#0a0a0a;font-weight:400;font-family:'Liberation Sans',sans-serif;-webkit-text-stroke:0.2px #000;transform:scaleX(0.8922);transform-origin:0 0;">Zig Zag...</span>
<div class="a" style="left:915px;top:321px;width:194px;height:25px;background:transparent;border:3px solid #e3121b;box-shadow:1px 2px 3px rgba(0,0,0,0.35)"></div>
<div class="a" style="left:1104px;top:388px;width:176px;height:26px;background:transparent;border:3px solid #e3121b;box-shadow:1px 2px 3px rgba(0,0,0,0.35)"></div>
<div class="a" style="left:887px;top:389px;width:34px;height:23px;background:transparent;border:3px solid #e3121b;box-shadow:1px 2px 3px rgba(0,0,0,0.35)"></div>
<svg class="a" style="left:1166px;top:395px;" width="13" height="19" viewBox="0 0 13 19"><path d="M1 1 L1 15 L4.5 11.5 L7.5 17.5 L9.5 16.5 L6.8 10.5 L11.5 10.5 Z" fill="#ffffff" stroke="#000" stroke-width="1"/></svg>
<svg class="a" style="left:0;top:0;filter:drop-shadow(1px 2px 1.5px rgba(0,0,0,0.3))" width="1362" height="728"><line x1="909.7" y1="382" x2="921.2" y2="363.7" stroke="#e3121b" stroke-width="1.6"/><path d="M927.6,353.5 L924.4,368.0 L921.7,362.8 L915.9,362.7 Z" fill="#e3121b"/><line x1="1081.3" y1="355" x2="1096.0" y2="373.8" stroke="#e3121b" stroke-width="1.6"/><path d="M1104,384 L1091.2,375.0 L1096.6,374.6 L1098.3,369.4 Z" fill="#e3121b"/><line x1="565" y1="633.7" x2="1087.1" y2="412.5" stroke="#e3121b" stroke-width="1.6"/><path d="M1100,407 L1087.1,417.7 L1088.0,412.1 L1083.4,408.8 Z" fill="#e3121b"/></svg>
<span class="t" id="t93" style="left:270.00px;top:633.00px;font-size:15px;color:#e0000f;font-weight:700;font-family:'Liberation Sans',sans-serif;-webkit-text-stroke:0.5px #e0000f;text-shadow:-1px -1px 0 #fff,1px -1px 0 #fff,-1px 1px 0 #fff,1px 1px 0 #fff,2px 3px 3px rgba(0,0,0,0.45);transform:scaleX(0.9799);transform-origin:0 0;">Thay đổi vị trí và số lượng của đối tượng</span>
</body></html>
